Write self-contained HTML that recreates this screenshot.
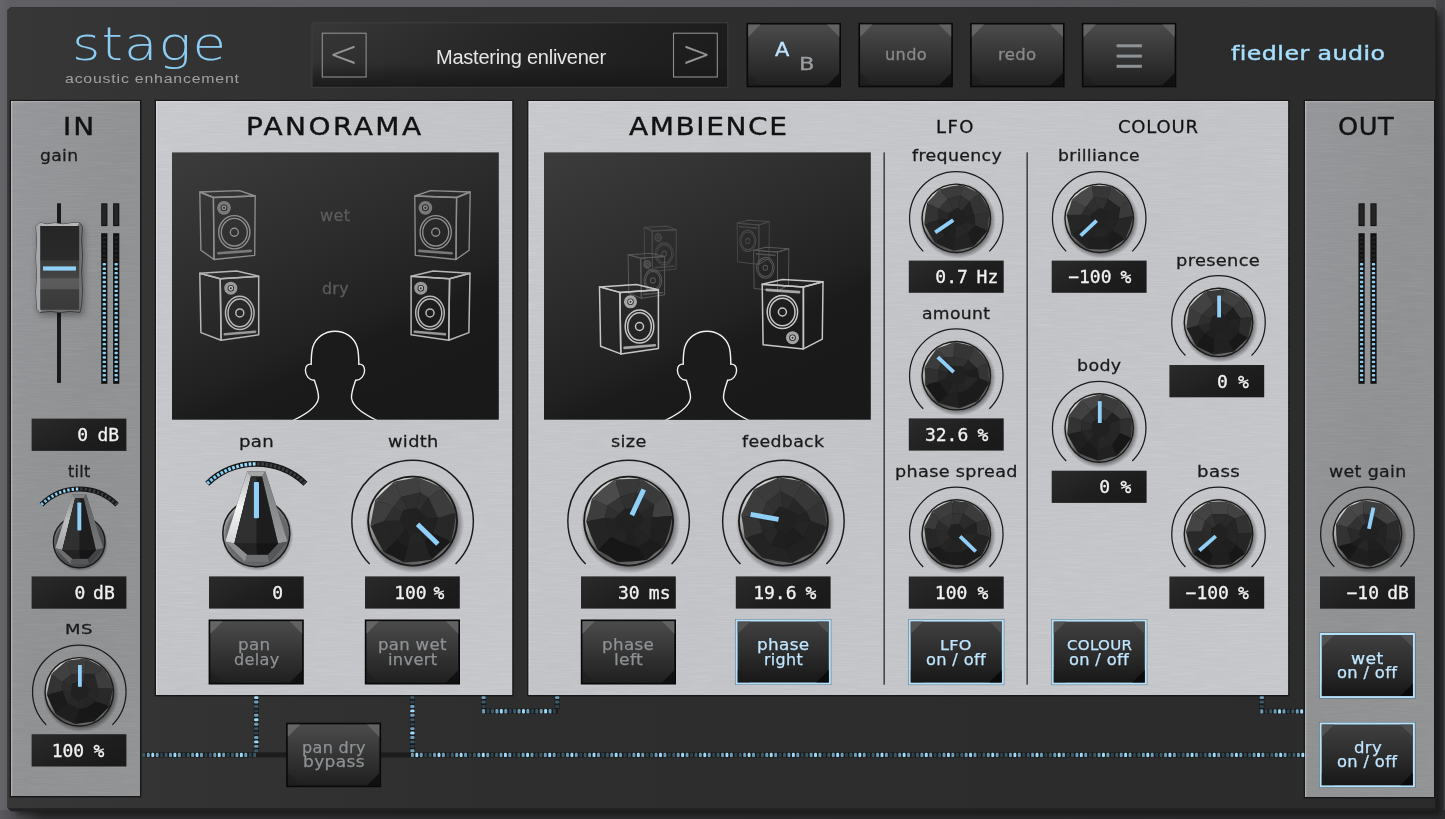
<!DOCTYPE html>
<html lang="en">
<head>
<meta charset="utf-8">
<title>stage - acoustic enhancement</title>
<style>
html,body{margin:0;padding:0;background:#56555a;overflow:hidden}
#app{position:relative;width:1445px;height:819px;overflow:hidden;
 background:linear-gradient(90deg,#66656a 0,#5f5e63 0.6%,#5e5d62 30%,#504f52 100%)}
#gfx{position:absolute;left:0;top:0;display:block}
#txt{position:absolute;left:0;top:0;width:1445px;height:819px;will-change:transform;transform:translateZ(0)}
.t{position:absolute;margin:0;padding:0;white-space:pre;line-height:1;font-weight:400;transform-origin:0 0;
 font-family:"DejaVu Sans","Liberation Sans",sans-serif}
.logo,.arrow{font-weight:200}
.arrow{-webkit-text-stroke:0.25px currentColor}
.brand{-webkit-text-stroke:0.45px currentColor}
.title{-webkit-text-stroke:0.4px currentColor}
.lbl,.title2{-webkit-text-stroke:0.28px currentColor}
.cap{-webkit-text-stroke:0.25px currentColor}
.btn,.ab{-webkit-text-stroke:0.3px currentColor}
.sub,.preset{font-family:"Liberation Sans","DejaVu Sans",sans-serif}
.val{font-family:"DejaVu Sans Mono","Liberation Mono",monospace;-webkit-text-stroke:0.3px currentColor}
</style>
</head>
<body>
<div id="app">
<svg id="gfx" width="1445" height="819" viewBox="0 0 1445 819">
<defs>
<linearGradient id="frame" x1="0" y1="0" x2="1" y2="0"><stop offset="0" stop-color="#373737"/><stop offset="0.12" stop-color="#333"/><stop offset="0.35" stop-color="#2e2e2e"/><stop offset="1" stop-color="#2b2b2b"/></linearGradient>
<linearGradient id="pnl" x1="0" y1="0" x2="1" y2="1"><stop offset="0" stop-color="#c6c8cc"/><stop offset="0.5" stop-color="#c0c2c6"/><stop offset="1" stop-color="#c4c6ca"/></linearGradient>
<linearGradient id="side" x1="0" y1="0" x2="1" y2="1"><stop offset="0" stop-color="#959699"/><stop offset="0.5" stop-color="#8e9092"/><stop offset="1" stop-color="#909294"/></linearGradient>
<linearGradient id="disp" x1="0" y1="0" x2="0.55" y2="1"><stop offset="0" stop-color="#3c3c3c"/><stop offset="0.45" stop-color="#2c2c2c"/><stop offset="0.72" stop-color="#212121"/><stop offset="0.8" stop-color="#1b1b1b"/><stop offset="1" stop-color="#191919"/></linearGradient>
<linearGradient id="preset" x1="0" y1="0" x2="0" y2="1"><stop offset="0" stop-color="#383838"/><stop offset="0.62" stop-color="#323232"/><stop offset="0.82" stop-color="#242424"/><stop offset="1" stop-color="#1b1b1b"/></linearGradient>
<linearGradient id="presetx" x1="0" y1="0" x2="1" y2="0"><stop offset="0" stop-color="#161616" stop-opacity="0"/><stop offset="0.45" stop-color="#161616" stop-opacity="0.45"/><stop offset="1" stop-color="#181818" stop-opacity="0.85"/></linearGradient>
<linearGradient id="btn" x1="0" y1="0" x2="0" y2="1"><stop offset="0" stop-color="#4b4b4b"/><stop offset="0.55" stop-color="#333"/><stop offset="1" stop-color="#1f1f1f"/></linearGradient>
<linearGradient id="btnon" x1="0" y1="0" x2="0" y2="1"><stop offset="0" stop-color="#404040"/><stop offset="0.55" stop-color="#2b2b2b"/><stop offset="1" stop-color="#171717"/></linearGradient>
<linearGradient id="vb" x1="0" y1="0" x2="1" y2="0.6"><stop offset="0" stop-color="#2b2b2b"/><stop offset="0.6" stop-color="#1f1f1f"/><stop offset="1" stop-color="#1a1a1a"/></linearGradient>
<linearGradient id="krim" x1="0.15" y1="0" x2="0.85" y2="1"><stop offset="0" stop-color="#e6e6e6"/><stop offset="0.3" stop-color="#a8a8a8"/><stop offset="0.62" stop-color="#4a4a4a"/><stop offset="1" stop-color="#777"/></linearGradient>
<radialGradient id="kshadow" cx="0.5" cy="0.5" r="0.5"><stop offset="0.86" stop-color="#000" stop-opacity="0.4"/><stop offset="1" stop-color="#000" stop-opacity="0"/></radialGradient>
<linearGradient id="cbase" x1="0" y1="0" x2="1" y2="1"><stop offset="0" stop-color="#000" stop-opacity="0.02"/><stop offset="1" stop-color="#000" stop-opacity="0.16"/></linearGradient>
<linearGradient id="cleft" x1="0" y1="0" x2="0" y2="1"><stop offset="0" stop-color="#b4b6b8"/><stop offset="0.5" stop-color="#f4f4f4"/><stop offset="1" stop-color="#d2d4d6"/></linearGradient>
<linearGradient id="cright" x1="0" y1="0" x2="0" y2="1"><stop offset="0" stop-color="#7a7c7e"/><stop offset="1" stop-color="#97999b"/></linearGradient>
<linearGradient id="fcap" x1="0" y1="0" x2="0" y2="1"><stop offset="0" stop-color="#262626"/><stop offset="0.4" stop-color="#2a2a2a"/><stop offset="0.42" stop-color="#3a3a3a"/><stop offset="0.62" stop-color="#444"/><stop offset="0.63" stop-color="#5c5c5c"/><stop offset="0.75" stop-color="#585858"/><stop offset="0.76" stop-color="#3e3e3e"/><stop offset="1" stop-color="#3a3a3a"/></linearGradient>
<linearGradient id="rstrip" x1="0" y1="0" x2="0" y2="1"><stop offset="0" stop-color="#454448"/><stop offset="0.05" stop-color="#38373b"/><stop offset="0.2" stop-color="#302f32"/><stop offset="1" stop-color="#2e2d30"/></linearGradient>
<linearGradient id="bstrip" x1="0" y1="0" x2="1" y2="0"><stop offset="0" stop-color="#5a595e"/><stop offset="0.012" stop-color="#4a494d"/><stop offset="0.03" stop-color="#2f2f31"/><stop offset="1" stop-color="#2b2b2d"/></linearGradient>
<filter id="brush" x="0" y="0" width="100%" height="100%"><feTurbulence type="fractalNoise" baseFrequency="0.035 0.95" numOctaves="2" seed="4" result="n"/><feColorMatrix type="matrix" values="0 0 0 0 1  0 0 0 0 1  0 0 0 0 1  1.6 0 0 0 -0.62"/></filter>
<filter id="soft" x="-20%" y="-20%" width="140%" height="140%"><feGaussianBlur stdDeviation="3"/></filter>
<clipPath id="cd1"><rect x="172" y="152.4" width="326.8" height="267.3"/></clipPath>
<clipPath id="cd2"><rect x="544" y="152.4" width="326.8" height="267.3"/></clipPath>
</defs>
<rect x="1436" y="0" width="9" height="819" fill="url(#rstrip)"/>
<rect x="1443.6" y="0" width="1.4" height="819" fill="#4a494c" opacity="0.8"/>
<rect x="0" y="810" width="1445" height="9" fill="url(#bstrip)"/>
<rect x="16" y="14" width="1424" height="800" fill="#000" opacity="0.5" filter="url(#soft)"/>
<path d="M10.5 7.3H1433.5L1436.6 10.5V811.2H11L7.5 808V10.3Z" fill="#212121"/>
<path d="M10.5 7.3H1432.5L1435 9.8V808.2H7.5V10.3Z" fill="url(#frame)"/>
<rect x="9.7" y="99.9" width="131.7" height="697.5" fill="#171717"/>
<rect x="11" y="101" width="129" height="695" fill="url(#side)"/>
<rect x="11" y="101" width="129" height="695" fill="#fff" filter="url(#brush)" opacity="0.08"/>
<rect x="11" y="101" width="1.2" height="695" fill="#fff" opacity="0.3"/>
<rect x="11" y="101" width="129" height="1.2" fill="#fff" opacity="0.2"/>
<rect x="154.7" y="99.9" width="358.9" height="596.5" fill="#171717"/>
<rect x="156" y="101" width="356.2" height="594" fill="url(#pnl)"/>
<rect x="156" y="101" width="356.2" height="594" fill="#fff" filter="url(#brush)" opacity="0.15"/>
<rect x="156" y="101" width="1.2" height="594" fill="#fff" opacity="0.3"/>
<rect x="156" y="101" width="356.2" height="1.2" fill="#fff" opacity="0.2"/>
<rect x="527.2" y="99.9" width="762.3" height="596.5" fill="#171717"/>
<rect x="528.5" y="101" width="759.6" height="594" fill="url(#pnl)"/>
<rect x="528.5" y="101" width="759.6" height="594" fill="#fff" filter="url(#brush)" opacity="0.15"/>
<rect x="528.5" y="101" width="1.2" height="594" fill="#fff" opacity="0.3"/>
<rect x="528.5" y="101" width="759.6" height="1.2" fill="#fff" opacity="0.2"/>
<rect x="1303.7" y="99.9" width="131.7" height="698.5" fill="#171717"/>
<rect x="1305" y="101" width="129" height="696" fill="url(#side)"/>
<rect x="1305" y="101" width="129" height="696" fill="#fff" filter="url(#brush)" opacity="0.08"/>
<rect x="1305" y="101" width="1.2" height="696" fill="#fff" opacity="0.3"/>
<rect x="1305" y="101" width="129" height="1.2" fill="#fff" opacity="0.2"/>
<rect x="312" y="22.8" width="415.8" height="64.5" fill="url(#preset)"/>
<rect x="312" y="22.8" width="415.8" height="64.5" fill="url(#presetx)" stroke="#3b4043" stroke-width="1"/>
<rect x="322.3" y="33.2" width="43.8" height="43.8" fill="none" stroke="#8e8e8e" stroke-width="1.1"/>
<rect x="673.5" y="33.2" width="43.8" height="43.8" fill="none" stroke="#8e8e8e" stroke-width="1.1"/>
<g transform="translate(746.5 22.9)">
<rect x="0" y="0" width="94.5" height="64.4" fill="#090909"/>
<rect x="1.7" y="1.7" width="91.1" height="61" fill="url(#btn)"/>
<polygon points="1.7,1.7 14.2,1.7 1.7,14.2" fill="#6a6a6a" opacity="0.85"/>
<polygon points="92.8,1.7 80.3,1.7 92.8,14.2" fill="#666" opacity="0.85"/>
<polygon points="92.8,62.7 80.3,62.7 92.8,50.2" fill="#0c0c0c" opacity="0.8"/>
<polygon points="1.7,62.7 14.2,62.7 1.7,50.2" fill="#1c1c1c" opacity="0.5"/>
</g>
<g transform="translate(858.4 22.9)">
<rect x="0" y="0" width="94.5" height="64.4" fill="#090909"/>
<rect x="1.7" y="1.7" width="91.1" height="61" fill="url(#btn)"/>
<polygon points="1.7,1.7 14.2,1.7 1.7,14.2" fill="#6a6a6a" opacity="0.85"/>
<polygon points="92.8,1.7 80.3,1.7 92.8,14.2" fill="#666" opacity="0.85"/>
<polygon points="92.8,62.7 80.3,62.7 92.8,50.2" fill="#0c0c0c" opacity="0.8"/>
<polygon points="1.7,62.7 14.2,62.7 1.7,50.2" fill="#1c1c1c" opacity="0.5"/>
</g>
<g transform="translate(970.1 22.9)">
<rect x="0" y="0" width="94.5" height="64.4" fill="#090909"/>
<rect x="1.7" y="1.7" width="91.1" height="61" fill="url(#btn)"/>
<polygon points="1.7,1.7 14.2,1.7 1.7,14.2" fill="#6a6a6a" opacity="0.85"/>
<polygon points="92.8,1.7 80.3,1.7 92.8,14.2" fill="#666" opacity="0.85"/>
<polygon points="92.8,62.7 80.3,62.7 92.8,50.2" fill="#0c0c0c" opacity="0.8"/>
<polygon points="1.7,62.7 14.2,62.7 1.7,50.2" fill="#1c1c1c" opacity="0.5"/>
</g>
<g transform="translate(1081.8 22.9)">
<rect x="0" y="0" width="94.5" height="64.4" fill="#090909"/>
<rect x="1.7" y="1.7" width="91.1" height="61" fill="url(#btn)"/>
<polygon points="1.7,1.7 14.2,1.7 1.7,14.2" fill="#6a6a6a" opacity="0.85"/>
<polygon points="92.8,1.7 80.3,1.7 92.8,14.2" fill="#666" opacity="0.85"/>
<polygon points="92.8,62.7 80.3,62.7 92.8,50.2" fill="#0c0c0c" opacity="0.8"/>
<polygon points="1.7,62.7 14.2,62.7 1.7,50.2" fill="#1c1c1c" opacity="0.5"/>
</g>
<rect x="1116.6" y="44.3" width="25.3" height="3" fill="#8d9297"/>
<rect x="1116.6" y="54.6" width="25.3" height="3" fill="#8d9297"/>
<rect x="1116.6" y="64.8" width="25.3" height="3" fill="#8d9297"/>
<rect x="57" y="203.3" width="4" height="179.6" fill="#1a1a1a"/>
<rect x="101.2" y="203.3" width="6.2" height="22.8" fill="#101010"/>
<rect x="102.1" y="204.3" width="4.4" height="20.8" fill="#252525"/>
<rect x="101.2" y="233.2" width="6.2" height="150.6" fill="#121212"/>
<rect x="102.6" y="236.4" width="3.4" height="2.4" rx="0.9" fill="#232323"/>
<rect x="102.6" y="240.84" width="3.4" height="2.4" rx="0.9" fill="#232323"/>
<rect x="102.6" y="245.28" width="3.4" height="2.4" rx="0.9" fill="#232323"/>
<rect x="102.6" y="249.72" width="3.4" height="2.4" rx="0.9" fill="#232323"/>
<rect x="102.6" y="254.16" width="3.4" height="2.4" rx="0.9" fill="#232323"/>
<rect x="102.6" y="258.6" width="3.4" height="2.4" rx="0.9" fill="#232323"/>
<rect x="102.6" y="263.04" width="3.4" height="2.4" rx="0.9" fill="#8fd0f2"/>
<rect x="102.6" y="267.48" width="3.4" height="2.4" rx="0.9" fill="#8fd0f2"/>
<rect x="102.6" y="271.92" width="3.4" height="2.4" rx="0.9" fill="#8fd0f2"/>
<rect x="102.6" y="276.36" width="3.4" height="2.4" rx="0.9" fill="#8fd0f2"/>
<rect x="102.6" y="280.8" width="3.4" height="2.4" rx="0.9" fill="#8fd0f2"/>
<rect x="102.6" y="285.24" width="3.4" height="2.4" rx="0.9" fill="#8fd0f2"/>
<rect x="102.6" y="289.68" width="3.4" height="2.4" rx="0.9" fill="#8fd0f2"/>
<rect x="102.6" y="294.12" width="3.4" height="2.4" rx="0.9" fill="#8fd0f2"/>
<rect x="102.6" y="298.56" width="3.4" height="2.4" rx="0.9" fill="#8fd0f2"/>
<rect x="102.6" y="303" width="3.4" height="2.4" rx="0.9" fill="#8fd0f2"/>
<rect x="102.6" y="307.44" width="3.4" height="2.4" rx="0.9" fill="#8fd0f2"/>
<rect x="102.6" y="311.88" width="3.4" height="2.4" rx="0.9" fill="#8fd0f2"/>
<rect x="102.6" y="316.32" width="3.4" height="2.4" rx="0.9" fill="#8fd0f2"/>
<rect x="102.6" y="320.76" width="3.4" height="2.4" rx="0.9" fill="#8fd0f2"/>
<rect x="102.6" y="325.2" width="3.4" height="2.4" rx="0.9" fill="#8fd0f2"/>
<rect x="102.6" y="329.64" width="3.4" height="2.4" rx="0.9" fill="#8fd0f2"/>
<rect x="102.6" y="334.08" width="3.4" height="2.4" rx="0.9" fill="#8fd0f2"/>
<rect x="102.6" y="338.52" width="3.4" height="2.4" rx="0.9" fill="#8fd0f2"/>
<rect x="102.6" y="342.96" width="3.4" height="2.4" rx="0.9" fill="#8fd0f2"/>
<rect x="102.6" y="347.4" width="3.4" height="2.4" rx="0.9" fill="#8fd0f2"/>
<rect x="102.6" y="351.84" width="3.4" height="2.4" rx="0.9" fill="#8fd0f2"/>
<rect x="102.6" y="356.28" width="3.4" height="2.4" rx="0.9" fill="#8fd0f2"/>
<rect x="102.6" y="360.72" width="3.4" height="2.4" rx="0.9" fill="#8fd0f2"/>
<rect x="102.6" y="365.16" width="3.4" height="2.4" rx="0.9" fill="#8fd0f2"/>
<rect x="102.6" y="369.6" width="3.4" height="2.4" rx="0.9" fill="#8fd0f2"/>
<rect x="102.6" y="374.04" width="3.4" height="2.4" rx="0.9" fill="#8fd0f2"/>
<rect x="102.6" y="378.48" width="3.4" height="2.4" rx="0.9" fill="#8fd0f2"/>
<rect x="113.1" y="203.3" width="6.2" height="22.8" fill="#101010"/>
<rect x="114" y="204.3" width="4.4" height="20.8" fill="#252525"/>
<rect x="113.1" y="233.2" width="6.2" height="150.6" fill="#121212"/>
<rect x="114.5" y="236.4" width="3.4" height="2.4" rx="0.9" fill="#232323"/>
<rect x="114.5" y="240.84" width="3.4" height="2.4" rx="0.9" fill="#232323"/>
<rect x="114.5" y="245.28" width="3.4" height="2.4" rx="0.9" fill="#232323"/>
<rect x="114.5" y="249.72" width="3.4" height="2.4" rx="0.9" fill="#232323"/>
<rect x="114.5" y="254.16" width="3.4" height="2.4" rx="0.9" fill="#232323"/>
<rect x="114.5" y="258.6" width="3.4" height="2.4" rx="0.9" fill="#232323"/>
<rect x="114.5" y="263.04" width="3.4" height="2.4" rx="0.9" fill="#8fd0f2"/>
<rect x="114.5" y="267.48" width="3.4" height="2.4" rx="0.9" fill="#8fd0f2"/>
<rect x="114.5" y="271.92" width="3.4" height="2.4" rx="0.9" fill="#8fd0f2"/>
<rect x="114.5" y="276.36" width="3.4" height="2.4" rx="0.9" fill="#8fd0f2"/>
<rect x="114.5" y="280.8" width="3.4" height="2.4" rx="0.9" fill="#8fd0f2"/>
<rect x="114.5" y="285.24" width="3.4" height="2.4" rx="0.9" fill="#8fd0f2"/>
<rect x="114.5" y="289.68" width="3.4" height="2.4" rx="0.9" fill="#8fd0f2"/>
<rect x="114.5" y="294.12" width="3.4" height="2.4" rx="0.9" fill="#8fd0f2"/>
<rect x="114.5" y="298.56" width="3.4" height="2.4" rx="0.9" fill="#8fd0f2"/>
<rect x="114.5" y="303" width="3.4" height="2.4" rx="0.9" fill="#8fd0f2"/>
<rect x="114.5" y="307.44" width="3.4" height="2.4" rx="0.9" fill="#8fd0f2"/>
<rect x="114.5" y="311.88" width="3.4" height="2.4" rx="0.9" fill="#8fd0f2"/>
<rect x="114.5" y="316.32" width="3.4" height="2.4" rx="0.9" fill="#8fd0f2"/>
<rect x="114.5" y="320.76" width="3.4" height="2.4" rx="0.9" fill="#8fd0f2"/>
<rect x="114.5" y="325.2" width="3.4" height="2.4" rx="0.9" fill="#8fd0f2"/>
<rect x="114.5" y="329.64" width="3.4" height="2.4" rx="0.9" fill="#8fd0f2"/>
<rect x="114.5" y="334.08" width="3.4" height="2.4" rx="0.9" fill="#8fd0f2"/>
<rect x="114.5" y="338.52" width="3.4" height="2.4" rx="0.9" fill="#8fd0f2"/>
<rect x="114.5" y="342.96" width="3.4" height="2.4" rx="0.9" fill="#8fd0f2"/>
<rect x="114.5" y="347.4" width="3.4" height="2.4" rx="0.9" fill="#8fd0f2"/>
<rect x="114.5" y="351.84" width="3.4" height="2.4" rx="0.9" fill="#8fd0f2"/>
<rect x="114.5" y="356.28" width="3.4" height="2.4" rx="0.9" fill="#8fd0f2"/>
<rect x="114.5" y="360.72" width="3.4" height="2.4" rx="0.9" fill="#8fd0f2"/>
<rect x="114.5" y="365.16" width="3.4" height="2.4" rx="0.9" fill="#8fd0f2"/>
<rect x="114.5" y="369.6" width="3.4" height="2.4" rx="0.9" fill="#8fd0f2"/>
<rect x="114.5" y="374.04" width="3.4" height="2.4" rx="0.9" fill="#8fd0f2"/>
<rect x="114.5" y="378.48" width="3.4" height="2.4" rx="0.9" fill="#8fd0f2"/>
<rect x="37.5" y="225" width="47" height="91" rx="5" fill="#000" opacity="0.3" filter="url(#soft)"/>
<path d="M39.5 222.6 L47 224.2 L55 223 L63 224.3 L72 223 L79.5 222.8 L82.5 226.5 L81.6 240 L82.6 256 L81.6 272 L82.6 290 L81.6 305 L80 312.5 L70 311.4 L60 312.6 L50 311.4 L40 312.6 L37 309 L36 292 L37 275 L36 258 L37 240 L36 226Z" fill="#6f7173" stroke="#3a3a3a" stroke-width="0.9"/>
<path d="M39.5 222.6 L47 224.2 L55 223 L63 224.3 L72 223 L79.5 222.8 L77 226.6 H42Z" fill="#b4b6b8"/>
<path d="M36 226 L39.5 222.6 L42 226 V309 L40 312.6 L37 309 L36 292 L37 275 L36 258 L37 240Z" fill="#a7a9ab"/>
<rect x="40.2" y="226" width="39" height="83.8" fill="url(#fcap)"/>
<rect x="43" y="266.4" width="33" height="4.2" fill="#8fcff8"/>
<rect x="31.6" y="418.6" width="94.8" height="32.3" fill="url(#vb)"/>
<g transform="translate(79.2 542)">
<path d="M-37.82 -37.56A53.3 53.3 0 0 1 37.82 -37.56" fill="none" stroke="#161616" stroke-width="5" transform="translate(0 0.3)"/>
<rect x="-1.15" y="-1.5" width="2.3" height="3" fill="#78c8f5" transform="translate(-37.03 -38.04) rotate(-44)"/>
<rect x="-1.15" y="-1.5" width="2.3" height="3" fill="#7ccaf6" transform="translate(-33.81 -40.91) rotate(-39.37)"/>
<rect x="-1.15" y="-1.5" width="2.3" height="3" fill="#80cdf7" transform="translate(-30.37 -43.5) rotate(-34.74)"/>
<rect x="-1.15" y="-1.5" width="2.3" height="3" fill="#85d0f8" transform="translate(-26.73 -45.81) rotate(-30.11)"/>
<rect x="-1.15" y="-1.5" width="2.3" height="3" fill="#89d3f9" transform="translate(-22.92 -47.82) rotate(-25.47)"/>
<rect x="-1.15" y="-1.5" width="2.3" height="3" fill="#8ed5fa" transform="translate(-18.96 -49.51) rotate(-20.84)"/>
<rect x="-1.15" y="-1.5" width="2.3" height="3" fill="#92d8fb" transform="translate(-14.88 -50.88) rotate(-16.21)"/>
<rect x="-1.15" y="-1.5" width="2.3" height="3" fill="#97dbfc" transform="translate(-10.7 -51.92) rotate(-11.58)"/>
<rect x="-1.15" y="-1.5" width="2.3" height="3" fill="#9bdefd" transform="translate(-6.45 -52.61) rotate(-6.95)"/>
<rect x="-1.15" y="-1.5" width="2.3" height="3" fill="#a0e1ff" transform="translate(-2.15 -52.96) rotate(-2.32)"/>
<rect x="-1.15" y="-1.5" width="2.3" height="3" fill="#3a3d40" transform="translate(2.15 -52.96) rotate(2.32)"/>
<rect x="-1.15" y="-1.5" width="2.3" height="3" fill="#3a3d40" transform="translate(6.45 -52.61) rotate(6.95)"/>
<rect x="-1.15" y="-1.5" width="2.3" height="3" fill="#3a3d40" transform="translate(10.7 -51.92) rotate(11.58)"/>
<rect x="-1.15" y="-1.5" width="2.3" height="3" fill="#3a3d40" transform="translate(14.88 -50.88) rotate(16.21)"/>
<rect x="-1.15" y="-1.5" width="2.3" height="3" fill="#3a3d40" transform="translate(18.96 -49.51) rotate(20.84)"/>
<rect x="-1.15" y="-1.5" width="2.3" height="3" fill="#3a3d40" transform="translate(22.92 -47.82) rotate(25.47)"/>
<rect x="-1.15" y="-1.5" width="2.3" height="3" fill="#3a3d40" transform="translate(26.73 -45.81) rotate(30.11)"/>
<rect x="-1.15" y="-1.5" width="2.3" height="3" fill="#3a3d40" transform="translate(30.37 -43.5) rotate(34.74)"/>
<rect x="-1.15" y="-1.5" width="2.3" height="3" fill="#3a3d40" transform="translate(33.81 -40.91) rotate(39.37)"/>
<rect x="-1.15" y="-1.5" width="2.3" height="3" fill="#3a3d40" transform="translate(37.03 -38.04) rotate(44)"/>
<g transform="scale(0.77)">
<circle cx="1.2" cy="2" r="36" fill="url(#kshadow)"/>
<circle r="33.5" fill="url(#cbase)" stroke="#1a1a1a" stroke-width="1.8"/>
<polygon points="-9,-62 8.9,-62 31.3,8.2 13,29 -11.2,29 -31,8.2" fill="#3c3c3c"/>
<polygon points="-9,-62 -5.3,-56.7 -21.9,10.3 -31,8.2" fill="url(#cleft)"/>
<polygon points="8.9,-62 31.3,8.2 21.7,10.3 5.7,-56.7" fill="url(#cright)"/>
<polygon points="-9,-62 8.9,-62 5.7,-56.7 -5.3,-56.7" fill="#a4a6a8"/>
<polygon points="-31,8.2 -21.9,10.3 -9,21.3 -11.2,29" fill="#8d8f91"/>
<polygon points="-11.2,29 -9,21.3 11.5,21.3 13,29" fill="#6d6f71"/>
<polygon points="31.3,8.2 13,29 11.5,21.3 21.7,10.3" fill="#55575a"/>
<polygon points="-9,-62 8.9,-62 31.3,8.2 13,29 -11.2,29 -31,8.2" fill="#000" opacity="0.22"/>
<polygon points="-5.3,-56.7 5.7,-56.7 21.7,10.3 11.5,21.3 -9,21.3 -21.9,10.3" fill="#1d1d1d"/>
<polygon points="-5.3,-56.7 0.2,-56.7 0.2,10.3 -21.9,10.3" fill="#303030"/>
<polygon points="-21.9,10.3 0.2,10.3 1,21.3 -9,21.3" fill="#232323"/>
<polygon points="0.2,10.3 21.7,10.3 11.5,21.3 1,21.3" fill="#151515"/>
<rect x="-2.4" y="-51.3" width="5.1" height="36.3" rx="1" fill="#8fcff8"/>
</g></g>
<rect x="31.6" y="576.4" width="94.8" height="32.3" fill="url(#vb)"/>
<g transform="translate(79.3 691.8)">
<path d="M-33.06 33.06A46.75 46.75 0 1 1 33.06 33.06" fill="none" stroke="#1b1b1b" stroke-width="1.25"/>
<circle cx="1.6" cy="2.2" r="38.1" fill="url(#kshadow)"/>
<circle r="34.9" fill="#1a1a1a"/>
<circle r="33.5" fill="url(#krim)"/>
<g transform="translate(0.6 -0.6) rotate(0)">
<circle r="30.97" fill="#1b1b1b"/>
<polygon points="5.84,-32.78 15.31,-27.87 24.53,-22.52 14.57,-17.17 5.37,-17.43" fill="#393939"/>
<polygon points="24.53,-22.52 29.15,-12.71 33.19,-2.65 18.19,-2.78 14.57,-17.17" fill="#3d3d3d"/>
<polygon points="33.19,-2.65 31.21,6.11 29.74,14.98 15.52,10.42 18.19,-2.78" fill="#292929"/>
<polygon points="29.74,14.98 22.34,22.64 14.58,29.94 7.48,16.08 15.52,10.42" fill="#171717"/>
<polygon points="14.58,29.94 4.75,31.44 -5.08,32.91 -0.96,17.83 7.48,16.08" fill="#181818"/>
<polygon points="-5.08,32.91 -14.67,28.22 -24.02,23.06 -12.95,11.62 -0.96,17.83" fill="#1e1e1e"/>
<polygon points="-24.02,23.06 -28.9,13.27 -33.15,3.19 -17.33,-0.45 -12.95,11.62" fill="#1b1b1b"/>
<polygon points="-33.15,3.19 -30.97,-7.21 -28.33,-17.51 -17.87,-9.27 -17.33,-0.45" fill="#333333"/>
<polygon points="-28.33,-17.51 -20.67,-24.17 -12.9,-30.7 -8.03,-17.11 -17.87,-9.27" fill="#404040"/>
<polygon points="-12.9,-30.7 -3.51,-31.61 5.84,-32.78 5.37,-17.43 -8.03,-17.11" fill="#3e3e3e"/>
<polygon points="5.37,-17.43 14.57,-17.17 0,0" fill="#262626"/>
<polygon points="14.57,-17.17 18.19,-2.78 0,0" fill="#272727"/>
<polygon points="18.19,-2.78 15.52,10.42 0,0" fill="#272727"/>
<polygon points="15.52,10.42 7.48,16.08 0,0" fill="#252525"/>
<polygon points="7.48,16.08 -0.96,17.83 0,0" fill="#262626"/>
<polygon points="-0.96,17.83 -12.95,11.62 0,0" fill="#272727"/>
<polygon points="-12.95,11.62 -17.33,-0.45 0,0" fill="#292929"/>
<polygon points="-17.33,-0.45 -17.87,-9.27 0,0" fill="#2d2d2d"/>
<polygon points="-17.87,-9.27 -8.03,-17.11 0,0" fill="#2f2f2f"/>
<polygon points="-8.03,-17.11 5.37,-17.43 0,0" fill="#303030"/>
<polygon points="1.92,-9.66 9.34,-2.7 7.33,6.14 -2.36,9.57 -9.21,4.01 -7.96,-7.82" fill="#212121"/>
<rect x="-1.9" y="-26.2" width="3.8" height="21.8" fill="#8fcff8"/>
</g>
</g>
<rect x="31.6" y="734.2" width="94.8" height="32.3" fill="url(#vb)"/>
<rect x="172" y="152.4" width="326.8" height="267.3" fill="url(#disp)"/>
<g clip-path="url(#cd1)">
<g transform="translate(199.5 190.3) scale(1 1)">
<polygon points="13.9,7.2 55.7,5.7 55.2,65 14.5,69.2" fill="none" stroke="#8e8e8e" stroke-width="1.35" stroke-linejoin="round"/>
<polygon points="0.3,1.7 39.8,0.3 55.7,5.7 13.9,7.2" fill="none" stroke="#8e8e8e" stroke-width="1.35" stroke-linejoin="round"/>
<polygon points="0.3,1.7 13.9,7.2 14.5,69.2 1.4,59.9" fill="none" stroke="#8e8e8e" stroke-width="1.35" stroke-linejoin="round"/>
<circle cx="24.5" cy="17.5" r="5.2" fill="none" stroke="#8e8e8e" stroke-width="3.4" opacity="0.8"/>
<circle cx="24.5" cy="17.5" r="1.8" fill="none" stroke="#8e8e8e" stroke-width="1.35" stroke-linejoin="round"/>
<ellipse cx="34.8" cy="41.9" rx="15.6" ry="16.6" fill="none" stroke="#8e8e8e" stroke-width="1.35" stroke-linejoin="round"/>
<ellipse cx="34.8" cy="41.9" rx="13.0" ry="13.8" fill="none" stroke="#8e8e8e" stroke-width="1.35" stroke-linejoin="round"/>
<circle cx="34.8" cy="41.9" r="4.0" fill="none" stroke="#8e8e8e" stroke-width="1.35" stroke-linejoin="round"/>
<line x1="18.8" y1="62.9" x2="51.2" y2="60.6" stroke="#8e8e8e" stroke-width="2.6" stroke-linecap="round" opacity="0.8"/>
</g>
<g transform="translate(470.5 190.3) scale(-1 1)">
<polygon points="13.9,7.2 55.7,5.7 55.2,65 14.5,69.2" fill="none" stroke="#8e8e8e" stroke-width="1.35" stroke-linejoin="round"/>
<polygon points="0.3,1.7 39.8,0.3 55.7,5.7 13.9,7.2" fill="none" stroke="#8e8e8e" stroke-width="1.35" stroke-linejoin="round"/>
<polygon points="0.3,1.7 13.9,7.2 14.5,69.2 1.4,59.9" fill="none" stroke="#8e8e8e" stroke-width="1.35" stroke-linejoin="round"/>
<circle cx="45.1" cy="17.5" r="5.2" fill="none" stroke="#8e8e8e" stroke-width="3.4" opacity="0.8"/>
<circle cx="45.1" cy="17.5" r="1.8" fill="none" stroke="#8e8e8e" stroke-width="1.35" stroke-linejoin="round"/>
<ellipse cx="34.8" cy="41.9" rx="15.6" ry="16.6" fill="none" stroke="#8e8e8e" stroke-width="1.35" stroke-linejoin="round"/>
<ellipse cx="34.8" cy="41.9" rx="13.0" ry="13.8" fill="none" stroke="#8e8e8e" stroke-width="1.35" stroke-linejoin="round"/>
<circle cx="34.8" cy="41.9" r="4.0" fill="none" stroke="#8e8e8e" stroke-width="1.35" stroke-linejoin="round"/>
<line x1="18.8" y1="62.9" x2="51.2" y2="60.6" stroke="#8e8e8e" stroke-width="2.6" stroke-linecap="round" opacity="0.8"/>
</g>
<g transform="translate(199.5 270.7) scale(1 1)">
<polygon points="20.7,8.1 59.2,5.5 59.2,64.1 21.6,69.6" fill="none" stroke="#b6b6b6" stroke-width="1.5" stroke-linejoin="round"/>
<polygon points="0.3,2.6 37.2,0.3 59.2,5.5 20.7,8.1" fill="none" stroke="#b6b6b6" stroke-width="1.5" stroke-linejoin="round"/>
<polygon points="0.3,2.6 20.7,8.1 21.6,69.6 1.4,61.9" fill="none" stroke="#b6b6b6" stroke-width="1.5" stroke-linejoin="round"/>
<circle cx="31.3" cy="17.5" r="4.9" fill="none" stroke="#b6b6b6" stroke-width="3.3" opacity="0.8"/>
<circle cx="31.3" cy="17.5" r="1.7" fill="none" stroke="#b6b6b6" stroke-width="1.5" stroke-linejoin="round"/>
<ellipse cx="40.3" cy="42.2" rx="14.3" ry="16.6" fill="none" stroke="#b6b6b6" stroke-width="1.5" stroke-linejoin="round"/>
<ellipse cx="40.3" cy="42.2" rx="11.8" ry="13.8" fill="none" stroke="#b6b6b6" stroke-width="1.5" stroke-linejoin="round"/>
<circle cx="40.3" cy="42.2" r="4.0" fill="none" stroke="#b6b6b6" stroke-width="1.5" stroke-linejoin="round"/>
<line x1="25.3" y1="63.6" x2="55.6" y2="61.0" stroke="#b6b6b6" stroke-width="2.6" stroke-linecap="round" opacity="0.8"/>
</g>
<g transform="translate(470.3 270.7) scale(-1 1)">
<polygon points="20.7,8.1 59.2,5.5 59.2,64.1 21.6,69.6" fill="none" stroke="#b6b6b6" stroke-width="1.5" stroke-linejoin="round"/>
<polygon points="0.3,2.6 37.2,0.3 59.2,5.5 20.7,8.1" fill="none" stroke="#b6b6b6" stroke-width="1.5" stroke-linejoin="round"/>
<polygon points="0.3,2.6 20.7,8.1 21.6,69.6 1.4,61.9" fill="none" stroke="#b6b6b6" stroke-width="1.5" stroke-linejoin="round"/>
<circle cx="49.5" cy="17.5" r="4.9" fill="none" stroke="#b6b6b6" stroke-width="3.3" opacity="0.8"/>
<circle cx="49.5" cy="17.5" r="1.7" fill="none" stroke="#b6b6b6" stroke-width="1.5" stroke-linejoin="round"/>
<ellipse cx="40.3" cy="42.2" rx="14.3" ry="16.6" fill="none" stroke="#b6b6b6" stroke-width="1.5" stroke-linejoin="round"/>
<ellipse cx="40.3" cy="42.2" rx="11.8" ry="13.8" fill="none" stroke="#b6b6b6" stroke-width="1.5" stroke-linejoin="round"/>
<circle cx="40.3" cy="42.2" r="4.0" fill="none" stroke="#b6b6b6" stroke-width="1.5" stroke-linejoin="round"/>
<line x1="25.3" y1="63.6" x2="55.6" y2="61.0" stroke="#b6b6b6" stroke-width="2.6" stroke-linecap="round" opacity="0.8"/>
</g>
<path d="M292 421 C305 414.5 317 407.5 318.4 398.5 C319 392.5 316.5 387 314.4 380.2 C309.5 380.6 305.4 375.5 305.4 370.2 C305.4 366.2 307.8 363.8 311.2 364.2 C311.2 358 311.4 352 312.8 347 C316 337 325 331.2 335 331.2 C345 331.2 354 337 357.2 347 C358.6 352 358.8 358 358.8 364.2 C362.2 363.8 364.6 366.2 364.6 370.2 C364.6 375.5 360.5 380.6 355.6 380.2 C353.5 387 351 392.5 351.6 398.5 C353 407.5 365 414.5 378 421Z" fill="#1b1b1b" stroke="#f2f2f2" stroke-width="1.4"/>
</g>
<g transform="translate(256.3 533.3)">
<path d="M-49.14 -51.24A71 71 0 0 1 49.14 -51.24" fill="none" stroke="#161616" stroke-width="5.6" transform="translate(0 1.6)"/>
<rect x="-1.35" y="-1.7" width="2.7" height="3.4" fill="#78c8f5" transform="translate(-48.06 -50.66) rotate(-42.6)"/>
<rect x="-1.35" y="-1.7" width="2.7" height="3.4" fill="#7bcaf5" transform="translate(-44.87 -53.43) rotate(-39.19)"/>
<rect x="-1.35" y="-1.7" width="2.7" height="3.4" fill="#7eccf6" transform="translate(-41.52 -56) rotate(-35.78)"/>
<rect x="-1.35" y="-1.7" width="2.7" height="3.4" fill="#82cef7" transform="translate(-38.02 -58.36) rotate(-32.38)"/>
<rect x="-1.35" y="-1.7" width="2.7" height="3.4" fill="#85d0f8" transform="translate(-34.39 -60.52) rotate(-28.97)"/>
<rect x="-1.35" y="-1.7" width="2.7" height="3.4" fill="#88d2f9" transform="translate(-30.63 -62.45) rotate(-25.56)"/>
<rect x="-1.35" y="-1.7" width="2.7" height="3.4" fill="#8cd4fa" transform="translate(-26.77 -64.16) rotate(-22.15)"/>
<rect x="-1.35" y="-1.7" width="2.7" height="3.4" fill="#8fd6fa" transform="translate(-22.82 -65.63) rotate(-18.74)"/>
<rect x="-1.35" y="-1.7" width="2.7" height="3.4" fill="#92d8fb" transform="translate(-18.78 -66.87) rotate(-15.34)"/>
<rect x="-1.35" y="-1.7" width="2.7" height="3.4" fill="#96dafc" transform="translate(-14.67 -67.87) rotate(-11.93)"/>
<rect x="-1.35" y="-1.7" width="2.7" height="3.4" fill="#99dcfd" transform="translate(-10.52 -68.62) rotate(-8.52)"/>
<rect x="-1.35" y="-1.7" width="2.7" height="3.4" fill="#9cdefe" transform="translate(-6.33 -69.12) rotate(-5.11)"/>
<rect x="-1.35" y="-1.7" width="2.7" height="3.4" fill="#a0e1ff" transform="translate(-2.11 -69.37) rotate(-1.7)"/>
<rect x="-1.35" y="-1.7" width="2.7" height="3.4" fill="#3a3d40" transform="translate(2.11 -69.37) rotate(1.7)"/>
<rect x="-1.35" y="-1.7" width="2.7" height="3.4" fill="#3a3d40" transform="translate(6.33 -69.12) rotate(5.11)"/>
<rect x="-1.35" y="-1.7" width="2.7" height="3.4" fill="#3a3d40" transform="translate(10.52 -68.62) rotate(8.52)"/>
<rect x="-1.35" y="-1.7" width="2.7" height="3.4" fill="#3a3d40" transform="translate(14.67 -67.87) rotate(11.93)"/>
<rect x="-1.35" y="-1.7" width="2.7" height="3.4" fill="#3a3d40" transform="translate(18.78 -66.87) rotate(15.34)"/>
<rect x="-1.35" y="-1.7" width="2.7" height="3.4" fill="#3a3d40" transform="translate(22.82 -65.63) rotate(18.74)"/>
<rect x="-1.35" y="-1.7" width="2.7" height="3.4" fill="#3a3d40" transform="translate(26.77 -64.16) rotate(22.15)"/>
<rect x="-1.35" y="-1.7" width="2.7" height="3.4" fill="#3a3d40" transform="translate(30.63 -62.45) rotate(25.56)"/>
<rect x="-1.35" y="-1.7" width="2.7" height="3.4" fill="#3a3d40" transform="translate(34.39 -60.52) rotate(28.97)"/>
<rect x="-1.35" y="-1.7" width="2.7" height="3.4" fill="#3a3d40" transform="translate(38.02 -58.36) rotate(32.38)"/>
<rect x="-1.35" y="-1.7" width="2.7" height="3.4" fill="#3a3d40" transform="translate(41.52 -56) rotate(35.78)"/>
<rect x="-1.35" y="-1.7" width="2.7" height="3.4" fill="#3a3d40" transform="translate(44.87 -53.43) rotate(39.19)"/>
<rect x="-1.35" y="-1.7" width="2.7" height="3.4" fill="#3a3d40" transform="translate(48.06 -50.66) rotate(42.6)"/>
<g transform="scale(1)">
<circle cx="1.2" cy="2" r="36" fill="url(#kshadow)"/>
<circle r="33.5" fill="url(#cbase)" stroke="#1a1a1a" stroke-width="1.5"/>
<polygon points="-9,-62 8.9,-62 31.3,8.2 13,29 -11.2,29 -31,8.2" fill="#3c3c3c"/>
<polygon points="-9,-62 -5.3,-56.7 -21.9,10.3 -31,8.2" fill="url(#cleft)"/>
<polygon points="8.9,-62 31.3,8.2 21.7,10.3 5.7,-56.7" fill="url(#cright)"/>
<polygon points="-9,-62 8.9,-62 5.7,-56.7 -5.3,-56.7" fill="#a4a6a8"/>
<polygon points="-31,8.2 -21.9,10.3 -9,21.3 -11.2,29" fill="#8d8f91"/>
<polygon points="-11.2,29 -9,21.3 11.5,21.3 13,29" fill="#6d6f71"/>
<polygon points="31.3,8.2 13,29 11.5,21.3 21.7,10.3" fill="#55575a"/>
<polygon points="-5.3,-56.7 5.7,-56.7 21.7,10.3 11.5,21.3 -9,21.3 -21.9,10.3" fill="#1d1d1d"/>
<polygon points="-5.3,-56.7 0.2,-56.7 0.2,10.3 -21.9,10.3" fill="#303030"/>
<polygon points="-21.9,10.3 0.2,10.3 1,21.3 -9,21.3" fill="#232323"/>
<polygon points="0.2,10.3 21.7,10.3 11.5,21.3 1,21.3" fill="#151515"/>
<rect x="-2.4" y="-51.3" width="5.1" height="36.3" rx="1" fill="#8fcff8"/>
</g></g>
<g transform="translate(412.6 521.1)">
<path d="M-42.97 42.97A60.77 60.77 0 1 1 42.97 42.97" fill="none" stroke="#1b1b1b" stroke-width="1.45"/>
<circle cx="2.08" cy="2.86" r="49.53" fill="url(#kshadow)"/>
<circle r="45.37" fill="#1a1a1a"/>
<circle r="43.55" fill="url(#krim)"/>
<g transform="translate(0.78 -0.78) rotate(134)">
<circle r="40.26" fill="#1b1b1b"/>
<polygon points="15.69,-40.35 26.5,-31.73 36.9,-22.63 23.36,-14.31 7,-22.49" fill="#232323"/>
<polygon points="36.9,-22.63 39.7,-11.54 43.28,-0.67 26.32,-1.75 23.36,-14.31" fill="#1a1a1a"/>
<polygon points="43.28,-0.67 39.09,13.47 33.68,27.2 20.79,20.4 26.32,-1.75" fill="#252525"/>
<polygon points="33.68,27.2 22.71,34.54 11.62,41.7 3.52,23.71 20.79,20.4" fill="#3e3e3e"/>
<polygon points="11.62,41.7 -1.63,41.31 -14.86,40.66 -8.33,24.89 3.52,23.71" fill="#404040"/>
<polygon points="-14.86,40.66 -24.23,33.5 -33.96,26.85 -24.7,14.46 -8.33,24.89" fill="#404040"/>
<polygon points="-33.96,26.85 -38.68,14.59 -43.23,2.26 -26.53,4.68 -24.7,14.46" fill="#434343"/>
<polygon points="-43.23,2.26 -39.65,-11.7 -35.08,-25.36 -18.64,-16.13 -26.53,4.68" fill="#3c3c3c"/>
<polygon points="-35.08,-25.36 -23.53,-33.99 -11.38,-41.77 -3.7,-22.78 -18.64,-16.13" fill="#282828"/>
<polygon points="-11.38,-41.77 2.17,-41.29 15.69,-40.35 7,-22.49 -3.7,-22.78" fill="#191919"/>
<polygon points="7,-22.49 23.36,-14.31 0,0" fill="#252525"/>
<polygon points="23.36,-14.31 26.32,-1.75 0,0" fill="#1f1f1f"/>
<polygon points="26.32,-1.75 20.79,20.4 0,0" fill="#252525"/>
<polygon points="20.79,20.4 3.52,23.71 0,0" fill="#2f2f2f"/>
<polygon points="3.52,23.71 -8.33,24.89 0,0" fill="#333333"/>
<polygon points="-8.33,24.89 -24.7,14.46 0,0" fill="#2e2e2e"/>
<polygon points="-24.7,14.46 -26.53,4.68 0,0" fill="#2e2e2e"/>
<polygon points="-26.53,4.68 -18.64,-16.13 0,0" fill="#272727"/>
<polygon points="-18.64,-16.13 -3.7,-22.78 0,0" fill="#212121"/>
<polygon points="-3.7,-22.78 7,-22.49 0,0" fill="#212121"/>
<polygon points="2.42,-14.33 13.25,-6.39 10,10.01 -0.58,14.46 -11.4,5.85 -11.06,-8.54" fill="#212121"/>
<rect x="-2.47" y="-34.06" width="4.94" height="28.34" fill="#8fcff8"/>
</g>
</g>
<rect x="209" y="576.4" width="94.7" height="32.2" fill="url(#vb)"/>
<rect x="365" y="576.4" width="94.8" height="32.2" fill="url(#vb)"/>
<g transform="translate(208.6 619.5)">
<rect x="0" y="0" width="95.2" height="65" fill="#090909"/>
<rect x="1.7" y="1.7" width="91.8" height="61.6" fill="url(#btn)"/>
<polygon points="1.7,1.7 14.2,1.7 1.7,14.2" fill="#6a6a6a" opacity="0.85"/>
<polygon points="93.5,1.7 81,1.7 93.5,14.2" fill="#666" opacity="0.85"/>
<polygon points="93.5,63.3 81,63.3 93.5,50.8" fill="#0c0c0c" opacity="0.8"/>
<polygon points="1.7,63.3 14.2,63.3 1.7,50.8" fill="#1c1c1c" opacity="0.5"/>
</g>
<g transform="translate(364.8 619.5)">
<rect x="0" y="0" width="95.2" height="65" fill="#090909"/>
<rect x="1.7" y="1.7" width="91.8" height="61.6" fill="url(#btn)"/>
<polygon points="1.7,1.7 14.2,1.7 1.7,14.2" fill="#6a6a6a" opacity="0.85"/>
<polygon points="93.5,1.7 81,1.7 93.5,14.2" fill="#666" opacity="0.85"/>
<polygon points="93.5,63.3 81,63.3 93.5,50.8" fill="#0c0c0c" opacity="0.8"/>
<polygon points="1.7,63.3 14.2,63.3 1.7,50.8" fill="#1c1c1c" opacity="0.5"/>
</g>
<rect x="544" y="152.4" width="326.8" height="267.3" fill="url(#disp)"/>
<g clip-path="url(#cd2)">
<g transform="translate(644 226.1) scale(0.58 0.66)">
<polygon points="13.9,7.2 55.7,5.7 55.2,65 14.5,69.2" fill="none" stroke="#4a4a4a" stroke-width="1.6" stroke-linejoin="round"/>
<polygon points="0.3,1.7 39.8,0.3 55.7,5.7 13.9,7.2" fill="none" stroke="#4a4a4a" stroke-width="1.6" stroke-linejoin="round"/>
<polygon points="0.3,1.7 13.9,7.2 14.5,69.2 1.4,59.9" fill="none" stroke="#4a4a4a" stroke-width="1.6" stroke-linejoin="round"/>
<circle cx="24.5" cy="17.5" r="5.2" fill="none" stroke="#4a4a4a" stroke-width="3.4" opacity="0.8"/>
<circle cx="24.5" cy="17.5" r="1.8" fill="none" stroke="#4a4a4a" stroke-width="1.6" stroke-linejoin="round"/>
<ellipse cx="34.8" cy="41.9" rx="15.6" ry="16.6" fill="none" stroke="#4a4a4a" stroke-width="1.6" stroke-linejoin="round"/>
<ellipse cx="34.8" cy="41.9" rx="13.0" ry="13.8" fill="none" stroke="#4a4a4a" stroke-width="1.6" stroke-linejoin="round"/>
<circle cx="34.8" cy="41.9" r="4.0" fill="none" stroke="#4a4a4a" stroke-width="1.6" stroke-linejoin="round"/>
<line x1="18.8" y1="62.9" x2="51.2" y2="60.6" stroke="#4a4a4a" stroke-width="2.6" stroke-linecap="round" opacity="0.8"/>
</g>
<g transform="translate(627.9 253) scale(0.62 0.65)">
<polygon points="20.7,8.1 59.2,5.5 59.2,64.1 21.6,69.6" fill="none" stroke="#585858" stroke-width="1.6" stroke-linejoin="round"/>
<polygon points="0.3,2.6 37.2,0.3 59.2,5.5 20.7,8.1" fill="none" stroke="#585858" stroke-width="1.6" stroke-linejoin="round"/>
<polygon points="0.3,2.6 20.7,8.1 21.6,69.6 1.4,61.9" fill="none" stroke="#585858" stroke-width="1.6" stroke-linejoin="round"/>
<circle cx="31.3" cy="17.5" r="4.9" fill="none" stroke="#585858" stroke-width="3.3" opacity="0.8"/>
<circle cx="31.3" cy="17.5" r="1.7" fill="none" stroke="#585858" stroke-width="1.6" stroke-linejoin="round"/>
<ellipse cx="40.3" cy="42.2" rx="14.3" ry="16.6" fill="none" stroke="#585858" stroke-width="1.6" stroke-linejoin="round"/>
<ellipse cx="40.3" cy="42.2" rx="11.8" ry="13.8" fill="none" stroke="#585858" stroke-width="1.6" stroke-linejoin="round"/>
<circle cx="40.3" cy="42.2" r="4.0" fill="none" stroke="#585858" stroke-width="1.6" stroke-linejoin="round"/>
<line x1="25.3" y1="63.6" x2="55.6" y2="61.0" stroke="#585858" stroke-width="2.6" stroke-linecap="round" opacity="0.8"/>
</g>
<g transform="translate(737.1 220) scale(0.53 0.64)">
<polygon points="0,4.9 41.2,7.7 41.2,69.6 0.9,65.4" fill="none" stroke="#4a4a4a" stroke-width="1.6" stroke-linejoin="round"/>
<polygon points="20.2,0.2 60.8,2.5 41.2,7.7 0,4.9" fill="none" stroke="#4a4a4a" stroke-width="1.6" stroke-linejoin="round"/>
<polygon points="41.2,7.7 60.8,2.5 60.1,59.9 41.2,69.6" fill="none" stroke="#4a4a4a" stroke-width="1.6" stroke-linejoin="round"/>
<ellipse cx="20.2" cy="32.7" rx="15.2" ry="16.6" fill="none" stroke="#4a4a4a" stroke-width="1.6" stroke-linejoin="round"/>
<ellipse cx="20.2" cy="32.7" rx="12.6" ry="13.8" fill="none" stroke="#4a4a4a" stroke-width="1.6" stroke-linejoin="round"/>
<circle cx="20.2" cy="32.7" r="4.0" fill="none" stroke="#4a4a4a" stroke-width="1.6" stroke-linejoin="round"/>
<line x1="4.4" y1="10.6" x2="36.9" y2="12.8" stroke="#4a4a4a" stroke-width="2.6" stroke-linecap="round" opacity="0.8"/>
</g>
<g transform="translate(753.6 247.2) scale(0.58 0.63)">
<polygon points="0,4.9 41.2,7.7 41.2,69.6 0.9,65.4" fill="none" stroke="#585858" stroke-width="1.6" stroke-linejoin="round"/>
<polygon points="20.2,0.2 60.8,2.5 41.2,7.7 0,4.9" fill="none" stroke="#585858" stroke-width="1.6" stroke-linejoin="round"/>
<polygon points="41.2,7.7 60.8,2.5 60.1,59.9 41.2,69.6" fill="none" stroke="#585858" stroke-width="1.6" stroke-linejoin="round"/>
<ellipse cx="20.2" cy="32.7" rx="15.2" ry="16.6" fill="none" stroke="#585858" stroke-width="1.6" stroke-linejoin="round"/>
<ellipse cx="20.2" cy="32.7" rx="12.6" ry="13.8" fill="none" stroke="#585858" stroke-width="1.6" stroke-linejoin="round"/>
<circle cx="20.2" cy="32.7" r="4.0" fill="none" stroke="#585858" stroke-width="1.6" stroke-linejoin="round"/>
<line x1="4.4" y1="10.6" x2="36.9" y2="12.8" stroke="#585858" stroke-width="2.6" stroke-linecap="round" opacity="0.8"/>
</g>
<g transform="translate(599.2 284.3) scale(1 1)">
<polygon points="20.7,8.1 59.2,5.5 59.2,64.1 21.6,69.6" fill="none" stroke="#c6c6c6" stroke-width="1.5" stroke-linejoin="round"/>
<polygon points="0.3,2.6 37.2,0.3 59.2,5.5 20.7,8.1" fill="none" stroke="#c6c6c6" stroke-width="1.5" stroke-linejoin="round"/>
<polygon points="0.3,2.6 20.7,8.1 21.6,69.6 1.4,61.9" fill="none" stroke="#c6c6c6" stroke-width="1.5" stroke-linejoin="round"/>
<circle cx="31.3" cy="17.5" r="4.9" fill="none" stroke="#c6c6c6" stroke-width="3.3" opacity="0.8"/>
<circle cx="31.3" cy="17.5" r="1.7" fill="none" stroke="#c6c6c6" stroke-width="1.5" stroke-linejoin="round"/>
<ellipse cx="40.3" cy="42.2" rx="14.3" ry="16.6" fill="none" stroke="#c6c6c6" stroke-width="1.5" stroke-linejoin="round"/>
<ellipse cx="40.3" cy="42.2" rx="11.8" ry="13.8" fill="none" stroke="#c6c6c6" stroke-width="1.5" stroke-linejoin="round"/>
<circle cx="40.3" cy="42.2" r="4.0" fill="none" stroke="#c6c6c6" stroke-width="1.5" stroke-linejoin="round"/>
<line x1="25.3" y1="63.6" x2="55.6" y2="61.0" stroke="#c6c6c6" stroke-width="2.6" stroke-linecap="round" opacity="0.8"/>
</g>
<g transform="translate(762.2 279.3) scale(1 1)">
<polygon points="0,4.9 41.2,7.7 41.2,69.6 0.9,65.4" fill="none" stroke="#c6c6c6" stroke-width="1.5" stroke-linejoin="round"/>
<polygon points="20.2,0.2 60.8,2.5 41.2,7.7 0,4.9" fill="none" stroke="#c6c6c6" stroke-width="1.5" stroke-linejoin="round"/>
<polygon points="41.2,7.7 60.8,2.5 60.1,59.9 41.2,69.6" fill="none" stroke="#c6c6c6" stroke-width="1.5" stroke-linejoin="round"/>
<circle cx="30.3" cy="58.4" r="4.9" fill="none" stroke="#c6c6c6" stroke-width="3.3" opacity="0.8"/>
<circle cx="30.3" cy="58.4" r="1.7" fill="none" stroke="#c6c6c6" stroke-width="1.5" stroke-linejoin="round"/>
<ellipse cx="20.2" cy="32.7" rx="15.2" ry="16.6" fill="none" stroke="#c6c6c6" stroke-width="1.5" stroke-linejoin="round"/>
<ellipse cx="20.2" cy="32.7" rx="12.6" ry="13.8" fill="none" stroke="#c6c6c6" stroke-width="1.5" stroke-linejoin="round"/>
<circle cx="20.2" cy="32.7" r="4.0" fill="none" stroke="#c6c6c6" stroke-width="1.5" stroke-linejoin="round"/>
<line x1="4.4" y1="10.6" x2="36.9" y2="12.8" stroke="#c6c6c6" stroke-width="2.6" stroke-linecap="round" opacity="0.8"/>
</g>
<path d="M664 421 C677 414.5 689 407.5 690.4 398.5 C691 392.5 688.5 387 686.4 380.2 C681.5 380.6 677.4 375.5 677.4 370.2 C677.4 366.2 679.8 363.8 683.2 364.2 C683.2 358 683.4 352 684.8 347 C688 337 697 331.2 707 331.2 C717 331.2 726 337 729.2 347 C730.6 352 730.8 358 730.8 364.2 C734.2 363.8 736.6 366.2 736.6 370.2 C736.6 375.5 732.5 380.6 727.6 380.2 C725.5 387 723 392.5 723.6 398.5 C725 407.5 737 414.5 750 421Z" fill="#1b1b1b" stroke="#f2f2f2" stroke-width="1.4"/>
</g>
<g transform="translate(628.6 521.1)">
<path d="M-42.97 42.97A60.77 60.77 0 1 1 42.97 42.97" fill="none" stroke="#1b1b1b" stroke-width="1.45"/>
<circle cx="2.08" cy="2.86" r="49.53" fill="url(#kshadow)"/>
<circle r="45.37" fill="#1a1a1a"/>
<circle r="43.55" fill="url(#krim)"/>
<g transform="translate(0.78 -0.78) rotate(25)">
<circle r="40.26" fill="#1b1b1b"/>
<polygon points="20.57,-38.09 28.58,-29.87 37.15,-22.23 19.63,-12.18 15.69,-24.52" fill="#404040"/>
<polygon points="37.15,-22.23 40.76,-6.92 42.4,8.73 26.5,8.35 19.63,-12.18" fill="#202020"/>
<polygon points="42.4,8.73 37.03,18.39 32.57,28.51 18.6,21.4 26.5,8.35" fill="#1c1c1c"/>
<polygon points="32.57,28.51 19.98,36.19 6.76,42.76 6.16,22.78 18.6,21.4" fill="#171717"/>
<polygon points="6.76,42.76 -4.82,41.06 -16.48,40.03 -9.54,22.86 6.16,22.78" fill="#171717"/>
<polygon points="-16.48,40.03 -28.22,30.21 -38.81,19.18 -23.29,8 -9.54,22.86" fill="#242424"/>
<polygon points="-38.81,19.18 -40.62,7.69 -43.13,-3.66 -25.96,-3.96 -23.29,8" fill="#3d3d3d"/>
<polygon points="-43.13,-3.66 -37.45,-17.52 -30.45,-30.77 -17.9,-17.53 -25.96,-3.96" fill="#4b4b4b"/>
<polygon points="-30.45,-30.77 -18.53,-36.96 -6.44,-42.81 -5.81,-28.11 -17.9,-17.53" fill="#383838"/>
<polygon points="-6.44,-42.81 7.11,-40.73 20.57,-38.09 15.69,-24.52 -5.81,-28.11" fill="#3b3b3b"/>
<polygon points="15.69,-24.52 19.63,-12.18 0,0" fill="#272727"/>
<polygon points="19.63,-12.18 26.5,8.35 0,0" fill="#252525"/>
<polygon points="26.5,8.35 18.6,21.4 0,0" fill="#232323"/>
<polygon points="18.6,21.4 6.16,22.78 0,0" fill="#202020"/>
<polygon points="6.16,22.78 -9.54,22.86 0,0" fill="#242424"/>
<polygon points="-9.54,22.86 -23.29,8 0,0" fill="#232323"/>
<polygon points="-23.29,8 -25.96,-3.96 0,0" fill="#303030"/>
<polygon points="-25.96,-3.96 -17.9,-17.53 0,0" fill="#343434"/>
<polygon points="-17.9,-17.53 -5.81,-28.11 0,0" fill="#303030"/>
<polygon points="-5.81,-28.11 15.69,-24.52 0,0" fill="#2c2c2c"/>
<polygon points="1.78,-14.38 12.84,-6.51 8.81,8.12 -3.68,13.62 -14.24,3.62 -9.01,-8.66" fill="#212121"/>
<rect x="-2.47" y="-34.06" width="4.94" height="28.34" fill="#8fcff8"/>
</g>
</g>
<g transform="translate(783.4 521.1)">
<path d="M-42.97 42.97A60.77 60.77 0 1 1 42.97 42.97" fill="none" stroke="#1b1b1b" stroke-width="1.45"/>
<circle cx="2.08" cy="2.86" r="49.53" fill="url(#kshadow)"/>
<circle r="45.37" fill="#1a1a1a"/>
<circle r="43.55" fill="url(#krim)"/>
<g transform="translate(0.78 -0.78) rotate(-80)">
<circle r="40.26" fill="#1b1b1b"/>
<polygon points="-2.01,-43.24 11.72,-39.65 25.19,-35.21 14.77,-20.22 -3.65,-24.53" fill="#3c3c3c"/>
<polygon points="25.19,-35.21 33.76,-23.86 41.59,-12 27.87,-8.48 14.77,-20.22" fill="#3b3b3b"/>
<polygon points="41.59,-12 41.34,-0.19 41.71,11.61 23.24,5.86 27.87,-8.48" fill="#3a3a3a"/>
<polygon points="41.71,11.61 34.5,22.79 27.04,33.8 12.27,20.64 23.24,5.86" fill="#383838"/>
<polygon points="27.04,33.8 14.26,38.8 1.29,43.27 3.79,26.29 12.27,20.64" fill="#333333"/>
<polygon points="1.29,43.27 -13.05,39.23 -26.95,33.88 -13.48,22.59 3.79,26.29" fill="#222222"/>
<polygon points="-26.95,33.88 -33.47,24.26 -40.58,15.07 -28.33,6.72 -13.48,22.59" fill="#212121"/>
<polygon points="-40.58,15.07 -41.34,0 -40.58,-15.07 -26.81,-9.13 -28.33,6.72" fill="#232323"/>
<polygon points="-40.58,-15.07 -32.55,-25.48 -24.37,-35.78 -15.74,-19.38 -26.81,-9.13" fill="#232323"/>
<polygon points="-24.37,-35.78 -13.09,-39.21 -2.01,-43.24 -3.65,-24.53 -15.74,-19.38" fill="#343434"/>
<polygon points="-3.65,-24.53 14.77,-20.22 0,0" fill="#323232"/>
<polygon points="14.77,-20.22 27.87,-8.48 0,0" fill="#313131"/>
<polygon points="27.87,-8.48 23.24,5.86 0,0" fill="#2c2c2c"/>
<polygon points="23.24,5.86 12.27,20.64 0,0" fill="#272727"/>
<polygon points="12.27,20.64 3.79,26.29 0,0" fill="#232323"/>
<polygon points="3.79,26.29 -13.48,22.59 0,0" fill="#242424"/>
<polygon points="-13.48,22.59 -28.33,6.72 0,0" fill="#1e1e1e"/>
<polygon points="-28.33,6.72 -26.81,-9.13 0,0" fill="#1f1f1f"/>
<polygon points="-26.81,-9.13 -15.74,-19.38 0,0" fill="#272727"/>
<polygon points="-15.74,-19.38 -3.65,-24.53 0,0" fill="#282828"/>
<polygon points="3.26,-11.87 13.02,-6.78 9.69,9.99 -1.31,13.6 -13.53,3.96 -9.09,-8.25" fill="#212121"/>
<rect x="-2.47" y="-34.06" width="4.94" height="28.34" fill="#8fcff8"/>
</g>
</g>
<rect x="581" y="576.4" width="94.8" height="32.2" fill="url(#vb)"/>
<rect x="735.8" y="576.4" width="94.8" height="32.2" fill="url(#vb)"/>
<g transform="translate(580.8 619.5)">
<rect x="0" y="0" width="95.2" height="65" fill="#090909"/>
<rect x="1.7" y="1.7" width="91.8" height="61.6" fill="url(#btn)"/>
<polygon points="1.7,1.7 14.2,1.7 1.7,14.2" fill="#6a6a6a" opacity="0.85"/>
<polygon points="93.5,1.7 81,1.7 93.5,14.2" fill="#666" opacity="0.85"/>
<polygon points="93.5,63.3 81,63.3 93.5,50.8" fill="#0c0c0c" opacity="0.8"/>
<polygon points="1.7,63.3 14.2,63.3 1.7,50.8" fill="#1c1c1c" opacity="0.5"/>
</g>
<g transform="translate(735.6 619.5)">
<rect x="-0.5" y="-0.5" width="96.2" height="66" fill="#3d4a55" opacity="0.7"/>
<rect x="0" y="0" width="95.2" height="65" fill="#b4e1fb"/>
<rect x="2" y="2" width="91.2" height="61" fill="url(#btnon)"/>
<polygon points="2,2 14.5,2 2,14.5" fill="#565656" opacity="0.85"/>
<polygon points="93.2,2 80.7,2 93.2,14.5" fill="#525252" opacity="0.85"/>
<polygon points="93.2,63 80.7,63 93.2,50.5" fill="#080808" opacity="0.8"/>
<polygon points="2,63 14.5,63 2,50.5" fill="#1c1c1c" opacity="0.5"/>
</g>
<rect x="883.5" y="152.4" width="1.3" height="532.3" fill="#2a2a2a"/>
<rect x="1026.5" y="152.4" width="1.3" height="532.3" fill="#2a2a2a"/>
<g transform="translate(956.3 218.3)">
<path d="M-33.06 33.06A46.75 46.75 0 1 1 33.06 33.06" fill="none" stroke="#1b1b1b" stroke-width="1.25"/>
<circle cx="1.6" cy="2.2" r="38.1" fill="url(#kshadow)"/>
<circle r="34.9" fill="#1a1a1a"/>
<circle r="33.5" fill="url(#krim)"/>
<g transform="translate(0.6 -0.6) rotate(-124)">
<circle r="30.97" fill="#1b1b1b"/>
<polygon points="12.72,-30.78 21.13,-23.77 29.07,-16.24 17.54,-9.97 8.49,-17.34" fill="#333333"/>
<polygon points="29.07,-16.24 30.88,-7.59 33.29,0.9 20.72,3.26 17.54,-9.97" fill="#474747"/>
<polygon points="33.29,0.9 29.47,11.95 24.51,22.54 16.15,15.56 20.72,3.26" fill="#3b3b3b"/>
<polygon points="24.51,22.54 16.23,27.35 8.04,32.31 6.5,19.54 16.15,15.56" fill="#3f3f3f"/>
<polygon points="8.04,32.31 -2.75,31.68 -13.48,30.45 -7.56,15.72 6.5,19.54" fill="#343434"/>
<polygon points="-13.48,30.45 -20.5,24.31 -27.73,18.44 -16.62,10.86 -7.56,15.72" fill="#313131"/>
<polygon points="-27.73,18.44 -30.73,8.19 -33.23,-2.19 -18.64,0.64 -16.62,10.86" fill="#1c1c1c"/>
<polygon points="-33.23,-2.19 -29.6,-11.64 -25.82,-21.03 -16.41,-13.57 -18.64,0.64" fill="#232323"/>
<polygon points="-25.82,-21.03 -17.13,-26.79 -8.25,-32.26 -8.33,-20.45 -16.41,-13.57" fill="#202020"/>
<polygon points="-8.25,-32.26 2.25,-31.72 12.72,-30.78 8.49,-17.34 -8.33,-20.45" fill="#252525"/>
<polygon points="8.49,-17.34 17.54,-9.97 0,0" fill="#282828"/>
<polygon points="17.54,-9.97 20.72,3.26 0,0" fill="#343434"/>
<polygon points="20.72,3.26 16.15,15.56 0,0" fill="#323232"/>
<polygon points="16.15,15.56 6.5,19.54 0,0" fill="#303030"/>
<polygon points="6.5,19.54 -7.56,15.72 0,0" fill="#232323"/>
<polygon points="-7.56,15.72 -16.62,10.86 0,0" fill="#212121"/>
<polygon points="-16.62,10.86 -18.64,0.64 0,0" fill="#272727"/>
<polygon points="-18.64,0.64 -16.41,-13.57 0,0" fill="#272727"/>
<polygon points="-16.41,-13.57 -8.33,-20.45 0,0" fill="#202020"/>
<polygon points="-8.33,-20.45 8.49,-17.34 0,0" fill="#1f1f1f"/>
<polygon points="2.28,-8.91 8.76,-4.1 7.84,6.28 -1.05,9.6 -9.57,2.92 -7.39,-5.77" fill="#212121"/>
<rect x="-1.9" y="-26.2" width="3.8" height="21.8" fill="#8fcff8"/>
</g>
</g>
<rect x="908.8" y="260.6" width="94.9" height="32.2" fill="url(#vb)"/>
<g transform="translate(956.3 375.7)">
<path d="M-33.06 33.06A46.75 46.75 0 1 1 33.06 33.06" fill="none" stroke="#1b1b1b" stroke-width="1.25"/>
<circle cx="1.6" cy="2.2" r="38.1" fill="url(#kshadow)"/>
<circle r="34.9" fill="#1a1a1a"/>
<circle r="33.5" fill="url(#krim)"/>
<g transform="translate(0.6 -0.6) rotate(-47)">
<circle r="30.97" fill="#1b1b1b"/>
<polygon points="5.61,-32.82 13.97,-28.57 22.47,-24.57 10.87,-14.64 4.51,-21.77" fill="#434343"/>
<polygon points="22.47,-24.57 27.94,-15.19 32.84,-5.5 18.59,-1.56 10.87,-14.64" fill="#353535"/>
<polygon points="32.84,-5.5 31.53,4.11 30.33,13.74 18.91,10.12 18.59,-1.56" fill="#3b3b3b"/>
<polygon points="30.33,13.74 23.59,21.33 16.71,28.8 12.79,18.44 18.91,10.12" fill="#343434"/>
<polygon points="16.71,28.8 6.09,31.21 -4.67,32.97 -4.2,17.31 12.79,18.44" fill="#1c1c1c"/>
<polygon points="-4.67,32.97 -13.64,28.73 -22.6,24.46 -12.84,12.32 -4.2,17.31" fill="#1b1b1b"/>
<polygon points="-22.6,24.46 -27.95,15.17 -32.82,5.62 -20.44,6.06 -12.84,12.32" fill="#212121"/>
<polygon points="-32.82,5.62 -31.32,-5.53 -28.92,-16.52 -16.74,-9 -20.44,6.06" fill="#181818"/>
<polygon points="-28.92,-16.52 -22.52,-22.45 -16.61,-28.86 -8.71,-17.31 -16.74,-9" fill="#303030"/>
<polygon points="-16.61,-28.86 -5.59,-31.31 5.61,-32.82 4.51,-21.77 -8.71,-17.31" fill="#3c3c3c"/>
<polygon points="4.51,-21.77 10.87,-14.64 0,0" fill="#313131"/>
<polygon points="10.87,-14.64 18.59,-1.56 0,0" fill="#323232"/>
<polygon points="18.59,-1.56 18.91,10.12 0,0" fill="#252525"/>
<polygon points="18.91,10.12 12.79,18.44 0,0" fill="#1e1e1e"/>
<polygon points="12.79,18.44 -4.2,17.31 0,0" fill="#262626"/>
<polygon points="-4.2,17.31 -12.84,12.32 0,0" fill="#242424"/>
<polygon points="-12.84,12.32 -20.44,6.06 0,0" fill="#232323"/>
<polygon points="-20.44,6.06 -16.74,-9 0,0" fill="#202020"/>
<polygon points="-16.74,-9 -8.71,-17.31 0,0" fill="#282828"/>
<polygon points="-8.71,-17.31 4.51,-21.77 0,0" fill="#2e2e2e"/>
<polygon points="2.66,-10.71 10.21,-2.57 7.57,7.56 -2.09,10.28 -8.88,2.12 -8.8,-6.79" fill="#212121"/>
<rect x="-1.9" y="-26.2" width="3.8" height="21.8" fill="#8fcff8"/>
</g>
</g>
<rect x="908.8" y="418.4" width="94.9" height="32.2" fill="url(#vb)"/>
<g transform="translate(956.3 533.9)">
<path d="M-33.06 33.06A46.75 46.75 0 1 1 33.06 33.06" fill="none" stroke="#1b1b1b" stroke-width="1.25"/>
<circle cx="1.6" cy="2.2" r="38.1" fill="url(#kshadow)"/>
<circle r="34.9" fill="#1a1a1a"/>
<circle r="33.5" fill="url(#krim)"/>
<g transform="translate(0.6 -0.6) rotate(134)">
<circle r="30.97" fill="#1b1b1b"/>
<polygon points="17.48,-28.35 25.18,-19.43 31.85,-9.72 21.15,-5.62 9.53,-17.05" fill="#1c1c1c"/>
<polygon points="31.85,-9.72 31.8,0.03 31.83,9.79 21.79,3.7 21.15,-5.62" fill="#1b1b1b"/>
<polygon points="31.83,9.79 25.42,19.1 18.26,27.85 12.68,18.08 21.79,3.7" fill="#272727"/>
<polygon points="18.26,27.85 9.5,30.35 0.89,33.29 3.63,22.07 12.68,18.08" fill="#3a3a3a"/>
<polygon points="0.89,33.29 -10.1,30.15 -20.76,26.03 -10.71,17.35 3.63,22.07" fill="#3d3d3d"/>
<polygon points="-20.76,26.03 -25.58,18.9 -30.98,12.21 -18.65,9.41 -10.71,17.35" fill="#373737"/>
<polygon points="-30.98,12.21 -31.8,0.09 -31.05,-12.03 -21.07,-6.39 -18.65,9.41" fill="#3c3c3c"/>
<polygon points="-31.05,-12.03 -25.45,-19.07 -20.26,-26.43 -13.28,-15.24 -21.07,-6.39" fill="#313131"/>
<polygon points="-20.26,-26.43 -11.08,-29.81 -1.93,-33.24 0.36,-18.07 -13.28,-15.24" fill="#232323"/>
<polygon points="-1.93,-33.24 7.79,-30.83 17.48,-28.35 9.53,-17.05 0.36,-18.07" fill="#1b1b1b"/>
<polygon points="9.53,-17.05 21.15,-5.62 0,0" fill="#232323"/>
<polygon points="21.15,-5.62 21.79,3.7 0,0" fill="#252525"/>
<polygon points="21.79,3.7 12.68,18.08 0,0" fill="#2a2a2a"/>
<polygon points="12.68,18.08 3.63,22.07 0,0" fill="#2c2c2c"/>
<polygon points="3.63,22.07 -10.71,17.35 0,0" fill="#373737"/>
<polygon points="-10.71,17.35 -18.65,9.41 0,0" fill="#343434"/>
<polygon points="-18.65,9.41 -21.07,-6.39 0,0" fill="#2b2b2b"/>
<polygon points="-21.07,-6.39 -13.28,-15.24 0,0" fill="#222222"/>
<polygon points="-13.28,-15.24 0.36,-18.07 0,0" fill="#272727"/>
<polygon points="0.36,-18.07 9.53,-17.05 0,0" fill="#262626"/>
<polygon points="1.86,-10.03 8.42,-4.2 6.87,6.44 -2.36,10.63 -8.85,4.62 -6.64,-6.08" fill="#212121"/>
<rect x="-1.9" y="-26.2" width="3.8" height="21.8" fill="#8fcff8"/>
</g>
</g>
<rect x="908.8" y="576.5" width="94.9" height="32.2" fill="url(#vb)"/>
<g transform="translate(908.7 619.6)">
<rect x="-0.5" y="-0.5" width="96.1" height="66" fill="#3d4a55" opacity="0.7"/>
<rect x="0" y="0" width="95.1" height="65" fill="#b4e1fb"/>
<rect x="2" y="2" width="91.1" height="61" fill="url(#btnon)"/>
<polygon points="2,2 14.5,2 2,14.5" fill="#565656" opacity="0.85"/>
<polygon points="93.1,2 80.6,2 93.1,14.5" fill="#525252" opacity="0.85"/>
<polygon points="93.1,63 80.6,63 93.1,50.5" fill="#080808" opacity="0.8"/>
<polygon points="2,63 14.5,63 2,50.5" fill="#1c1c1c" opacity="0.5"/>
</g>
<g transform="translate(1099.2 218.3)">
<path d="M-33.06 33.06A46.75 46.75 0 1 1 33.06 33.06" fill="none" stroke="#1b1b1b" stroke-width="1.25"/>
<circle cx="1.6" cy="2.2" r="38.1" fill="url(#kshadow)"/>
<circle r="34.9" fill="#1a1a1a"/>
<circle r="33.5" fill="url(#krim)"/>
<g transform="translate(0.6 -0.6) rotate(-133)">
<circle r="30.97" fill="#1b1b1b"/>
<polygon points="6.66,-32.63 15.7,-27.66 24.6,-22.44 14.89,-11.71 4.58,-21.34" fill="#262626"/>
<polygon points="24.6,-22.44 28.06,-14.96 32.35,-7.91 17.28,-3.08 14.89,-11.71" fill="#3f3f3f"/>
<polygon points="32.35,-7.91 31.53,4.18 29.17,16.07 19.1,9.43 17.28,-3.08" fill="#494949"/>
<polygon points="29.17,16.07 21.96,23 14.71,29.88 8.1,18.63 19.1,9.43" fill="#363636"/>
<polygon points="14.71,29.88 4.62,31.46 -5.5,32.84 -6.57,21.48 8.1,18.63" fill="#3d3d3d"/>
<polygon points="-5.5,32.84 -13.36,28.86 -21.47,25.45 -13.53,12.86 -6.57,21.48" fill="#3a3a3a"/>
<polygon points="-21.47,25.45 -27.93,15.21 -33.03,4.23 -17.79,0.24 -13.53,12.86" fill="#262626"/>
<polygon points="-33.03,4.23 -31.42,-4.92 -30.16,-14.12 -19.32,-6.54 -17.79,0.24" fill="#1c1c1c"/>
<polygon points="-30.16,-14.12 -22.56,-22.41 -14.32,-30.06 -8.6,-20.05 -19.32,-6.54" fill="#1f1f1f"/>
<polygon points="-14.32,-30.06 -3.86,-31.57 6.66,-32.63 4.58,-21.34 -8.6,-20.05" fill="#212121"/>
<polygon points="4.58,-21.34 14.89,-11.71 0,0" fill="#252525"/>
<polygon points="14.89,-11.71 17.28,-3.08 0,0" fill="#2c2c2c"/>
<polygon points="17.28,-3.08 19.1,9.43 0,0" fill="#2f2f2f"/>
<polygon points="19.1,9.43 8.1,18.63 0,0" fill="#303030"/>
<polygon points="8.1,18.63 -6.57,21.48 0,0" fill="#242424"/>
<polygon points="-6.57,21.48 -13.53,12.86 0,0" fill="#222222"/>
<polygon points="-13.53,12.86 -17.79,0.24 0,0" fill="#232323"/>
<polygon points="-17.79,0.24 -19.32,-6.54 0,0" fill="#222222"/>
<polygon points="-19.32,-6.54 -8.6,-20.05 0,0" fill="#242424"/>
<polygon points="-8.6,-20.05 4.58,-21.34 0,0" fill="#232323"/>
<polygon points="0.68,-10.48 8.79,-4.28 7.09,6.96 -1.84,9.87 -8.96,3.21 -8.86,-7.02" fill="#212121"/>
<rect x="-1.9" y="-26.2" width="3.8" height="21.8" fill="#8fcff8"/>
</g>
</g>
<rect x="1051.7" y="260.6" width="94.9" height="32.2" fill="url(#vb)"/>
<g transform="translate(1099.2 428)">
<path d="M-33.06 33.06A46.75 46.75 0 1 1 33.06 33.06" fill="none" stroke="#1b1b1b" stroke-width="1.25"/>
<circle cx="1.6" cy="2.2" r="38.1" fill="url(#kshadow)"/>
<circle r="34.9" fill="#1a1a1a"/>
<circle r="33.5" fill="url(#krim)"/>
<g transform="translate(0.6 -0.6) rotate(0)">
<circle r="30.97" fill="#1b1b1b"/>
<polygon points="1.18,-33.28 10.5,-30.02 19.82,-26.76 12.67,-14.54 -1.54,-22.48" fill="#3b3b3b"/>
<polygon points="19.82,-26.76 26.15,-18.1 32.03,-9.11 20.29,-8.52 12.67,-14.54" fill="#3e3e3e"/>
<polygon points="32.03,-9.11 31.79,0.75 31.56,10.62 20.24,5.96 20.29,-8.52" fill="#2f2f2f"/>
<polygon points="31.56,10.62 24.71,20.02 16.93,28.67 12.33,17.04 20.24,5.96" fill="#171717"/>
<polygon points="16.93,28.67 7.57,30.89 -1.76,33.25 -2.62,22.37 12.33,17.04" fill="#212121"/>
<polygon points="-1.76,33.25 -11.79,29.53 -21.63,25.32 -11.79,14.14 -2.62,22.37" fill="#1b1b1b"/>
<polygon points="-21.63,25.32 -27.33,16.27 -32.57,6.95 -18.6,3.94 -11.79,14.14" fill="#1f1f1f"/>
<polygon points="-32.57,6.95 -31.71,-2.35 -31.19,-11.67 -18.57,-7.12 -18.6,3.94" fill="#333333"/>
<polygon points="-31.19,-11.67 -24.92,-19.75 -18.48,-27.7 -8.96,-16.7 -18.57,-7.12" fill="#414141"/>
<polygon points="-18.48,-27.7 -8.68,-30.59 1.18,-33.28 -1.54,-22.48 -8.96,-16.7" fill="#464646"/>
<polygon points="-1.54,-22.48 12.67,-14.54 0,0" fill="#323232"/>
<polygon points="12.67,-14.54 20.29,-8.52 0,0" fill="#212121"/>
<polygon points="20.29,-8.52 20.24,5.96 0,0" fill="#272727"/>
<polygon points="20.24,5.96 12.33,17.04 0,0" fill="#262626"/>
<polygon points="12.33,17.04 -2.62,22.37 0,0" fill="#262626"/>
<polygon points="-2.62,22.37 -11.79,14.14 0,0" fill="#202020"/>
<polygon points="-11.79,14.14 -18.6,3.94 0,0" fill="#262626"/>
<polygon points="-18.6,3.94 -18.57,-7.12 0,0" fill="#2c2c2c"/>
<polygon points="-18.57,-7.12 -8.96,-16.7 0,0" fill="#313131"/>
<polygon points="-8.96,-16.7 -1.54,-22.48 0,0" fill="#2d2d2d"/>
<polygon points="0.87,-9.63 10.88,-2.41 7.84,7.76 -1.21,9.86 -8.79,4.62 -7.14,-5.9" fill="#212121"/>
<rect x="-1.9" y="-26.2" width="3.8" height="21.8" fill="#8fcff8"/>
</g>
</g>
<rect x="1051.7" y="470.7" width="94.9" height="32.2" fill="url(#vb)"/>
<g transform="translate(1051.7 619.6)">
<rect x="-0.5" y="-0.5" width="96.1" height="66" fill="#3d4a55" opacity="0.7"/>
<rect x="0" y="0" width="95.1" height="65" fill="#b4e1fb"/>
<rect x="2" y="2" width="91.1" height="61" fill="url(#btnon)"/>
<polygon points="2,2 14.5,2 2,14.5" fill="#565656" opacity="0.85"/>
<polygon points="93.1,2 80.6,2 93.1,14.5" fill="#525252" opacity="0.85"/>
<polygon points="93.1,63 80.6,63 93.1,50.5" fill="#080808" opacity="0.8"/>
<polygon points="2,63 14.5,63 2,50.5" fill="#1c1c1c" opacity="0.5"/>
</g>
<g transform="translate(1218.5 322.4)">
<path d="M-33.06 33.06A46.75 46.75 0 1 1 33.06 33.06" fill="none" stroke="#1b1b1b" stroke-width="1.25"/>
<circle cx="1.6" cy="2.2" r="38.1" fill="url(#kshadow)"/>
<circle r="34.9" fill="#1a1a1a"/>
<circle r="33.5" fill="url(#krim)"/>
<g transform="translate(0.6 -0.6) rotate(0)">
<circle r="30.97" fill="#1b1b1b"/>
<polygon points="5.83,-32.78 15.1,-27.99 24.19,-22.89 13.8,-14.18 0.95,-21.85" fill="#404040"/>
<polygon points="24.19,-22.89 28.63,-13.85 32.96,-4.77 21.27,-3.55 13.8,-14.18" fill="#3a3a3a"/>
<polygon points="32.96,-4.77 31.29,5.67 29.19,16.03 19.15,10.89 21.27,-3.55" fill="#2c2c2c"/>
<polygon points="29.19,16.03 21.94,23.02 14.61,29.92 10.19,19.93 19.15,10.89" fill="#181818"/>
<polygon points="14.61,29.92 4.37,31.5 -5.91,32.77 -5.08,17.83 10.19,19.93" fill="#212121"/>
<polygon points="-5.91,32.77 -14.41,28.35 -23,24.08 -14.29,11.7 -5.08,17.83" fill="#181818"/>
<polygon points="-23,24.08 -27.9,15.26 -32.68,6.38 -21.27,3.73 -14.29,11.7" fill="#1f1f1f"/>
<polygon points="-32.68,6.38 -31.53,-4.17 -29.9,-14.66 -17.47,-6.83 -21.27,3.73" fill="#3b3b3b"/>
<polygon points="-29.9,-14.66 -22.01,-22.96 -13.38,-30.49 -5.71,-17.89 -17.47,-6.83" fill="#424242"/>
<polygon points="-13.38,-30.49 -3.76,-31.58 5.83,-32.78 0.95,-21.85 -5.71,-17.89" fill="#383838"/>
<polygon points="0.95,-21.85 13.8,-14.18 0,0" fill="#2e2e2e"/>
<polygon points="13.8,-14.18 21.27,-3.55 0,0" fill="#1e1e1e"/>
<polygon points="21.27,-3.55 19.15,10.89 0,0" fill="#222222"/>
<polygon points="19.15,10.89 10.19,19.93 0,0" fill="#212121"/>
<polygon points="10.19,19.93 -5.08,17.83 0,0" fill="#222222"/>
<polygon points="-5.08,17.83 -14.29,11.7 0,0" fill="#1f1f1f"/>
<polygon points="-14.29,11.7 -21.27,3.73 0,0" fill="#282828"/>
<polygon points="-21.27,3.73 -17.47,-6.83 0,0" fill="#2f2f2f"/>
<polygon points="-17.47,-6.83 -5.71,-17.89 0,0" fill="#333333"/>
<polygon points="-5.71,-17.89 0.95,-21.85 0,0" fill="#2f2f2f"/>
<polygon points="2.23,-8.83 8.63,-4.08 8.7,5.73 -0.62,10.8 -10.13,4.92 -7.2,-5.92" fill="#212121"/>
<rect x="-1.9" y="-26.2" width="3.8" height="21.8" fill="#8fcff8"/>
</g>
</g>
<rect x="1169.4" y="365" width="94.8" height="32.3" fill="url(#vb)"/>
<g transform="translate(1218.5 533.9)">
<path d="M-33.06 33.06A46.75 46.75 0 1 1 33.06 33.06" fill="none" stroke="#1b1b1b" stroke-width="1.25"/>
<circle cx="1.6" cy="2.2" r="38.1" fill="url(#kshadow)"/>
<circle r="34.9" fill="#1a1a1a"/>
<circle r="33.5" fill="url(#krim)"/>
<g transform="translate(0.6 -0.6) rotate(-131)">
<circle r="30.97" fill="#1b1b1b"/>
<polygon points="1.61,-33.26 12.61,-29.19 23.12,-23.97 12.99,-11.68 -0.25,-17.75" fill="#292929"/>
<polygon points="23.12,-23.97 27.75,-15.53 32.52,-7.16 18.66,-2.3 12.99,-11.68" fill="#444444"/>
<polygon points="32.52,-7.16 31.7,2.52 30.98,12.21 19.03,7.58 18.66,-2.3" fill="#434343"/>
<polygon points="30.98,12.21 24.46,20.32 17.68,28.22 9.05,18.73 19.03,7.58" fill="#444444"/>
<polygon points="17.68,28.22 7.28,30.96 -3.25,33.14 0.49,21.64 9.05,18.73" fill="#424242"/>
<polygon points="-3.25,33.14 -12.29,29.33 -21.35,25.56 -12.91,14 0.49,21.64" fill="#323232"/>
<polygon points="-21.35,25.56 -27.37,16.19 -32.68,6.39 -20.08,5.4 -12.91,14" fill="#252525"/>
<polygon points="-32.68,6.39 -31.7,-2.54 -31.25,-11.52 -21.72,-5.92 -20.08,5.4" fill="#171717"/>
<polygon points="-31.25,-11.52 -24.64,-20.1 -17.57,-28.29 -11.52,-19.22 -21.72,-5.92" fill="#1f1f1f"/>
<polygon points="-17.57,-28.29 -7.98,-30.78 1.61,-33.26 -0.25,-17.75 -11.52,-19.22" fill="#171717"/>
<polygon points="-0.25,-17.75 12.99,-11.68 0,0" fill="#2a2a2a"/>
<polygon points="12.99,-11.68 18.66,-2.3 0,0" fill="#2d2d2d"/>
<polygon points="18.66,-2.3 19.03,7.58 0,0" fill="#323232"/>
<polygon points="19.03,7.58 9.05,18.73 0,0" fill="#2b2b2b"/>
<polygon points="9.05,18.73 0.49,21.64 0,0" fill="#2a2a2a"/>
<polygon points="0.49,21.64 -12.91,14 0,0" fill="#252525"/>
<polygon points="-12.91,14 -20.08,5.4 0,0" fill="#262626"/>
<polygon points="-20.08,5.4 -21.72,-5.92 0,0" fill="#1f1f1f"/>
<polygon points="-21.72,-5.92 -11.52,-19.22 0,0" fill="#202020"/>
<polygon points="-11.52,-19.22 -0.25,-17.75 0,0" fill="#212121"/>
<polygon points="1.25,-9.39 8.96,-2.99 7.6,6.66 -2.81,9.26 -9.03,1.94 -7.86,-7.6" fill="#212121"/>
<rect x="-1.9" y="-26.2" width="3.8" height="21.8" fill="#8fcff8"/>
</g>
</g>
<rect x="1169.4" y="576.5" width="94.8" height="32.2" fill="url(#vb)"/>
<rect x="1358.5" y="203.3" width="6.2" height="22.8" fill="#101010"/>
<rect x="1359.4" y="204.3" width="4.4" height="20.8" fill="#252525"/>
<rect x="1358.5" y="233.2" width="6.2" height="150.6" fill="#121212"/>
<rect x="1359.9" y="236.4" width="3.4" height="2.4" rx="0.9" fill="#232323"/>
<rect x="1359.9" y="240.84" width="3.4" height="2.4" rx="0.9" fill="#232323"/>
<rect x="1359.9" y="245.28" width="3.4" height="2.4" rx="0.9" fill="#232323"/>
<rect x="1359.9" y="249.72" width="3.4" height="2.4" rx="0.9" fill="#232323"/>
<rect x="1359.9" y="254.16" width="3.4" height="2.4" rx="0.9" fill="#232323"/>
<rect x="1359.9" y="258.6" width="3.4" height="2.4" rx="0.9" fill="#232323"/>
<rect x="1359.9" y="263.04" width="3.4" height="2.4" rx="0.9" fill="#8fd0f2"/>
<rect x="1359.9" y="267.48" width="3.4" height="2.4" rx="0.9" fill="#8fd0f2"/>
<rect x="1359.9" y="271.92" width="3.4" height="2.4" rx="0.9" fill="#8fd0f2"/>
<rect x="1359.9" y="276.36" width="3.4" height="2.4" rx="0.9" fill="#8fd0f2"/>
<rect x="1359.9" y="280.8" width="3.4" height="2.4" rx="0.9" fill="#8fd0f2"/>
<rect x="1359.9" y="285.24" width="3.4" height="2.4" rx="0.9" fill="#8fd0f2"/>
<rect x="1359.9" y="289.68" width="3.4" height="2.4" rx="0.9" fill="#8fd0f2"/>
<rect x="1359.9" y="294.12" width="3.4" height="2.4" rx="0.9" fill="#8fd0f2"/>
<rect x="1359.9" y="298.56" width="3.4" height="2.4" rx="0.9" fill="#8fd0f2"/>
<rect x="1359.9" y="303" width="3.4" height="2.4" rx="0.9" fill="#8fd0f2"/>
<rect x="1359.9" y="307.44" width="3.4" height="2.4" rx="0.9" fill="#8fd0f2"/>
<rect x="1359.9" y="311.88" width="3.4" height="2.4" rx="0.9" fill="#8fd0f2"/>
<rect x="1359.9" y="316.32" width="3.4" height="2.4" rx="0.9" fill="#8fd0f2"/>
<rect x="1359.9" y="320.76" width="3.4" height="2.4" rx="0.9" fill="#8fd0f2"/>
<rect x="1359.9" y="325.2" width="3.4" height="2.4" rx="0.9" fill="#8fd0f2"/>
<rect x="1359.9" y="329.64" width="3.4" height="2.4" rx="0.9" fill="#8fd0f2"/>
<rect x="1359.9" y="334.08" width="3.4" height="2.4" rx="0.9" fill="#8fd0f2"/>
<rect x="1359.9" y="338.52" width="3.4" height="2.4" rx="0.9" fill="#8fd0f2"/>
<rect x="1359.9" y="342.96" width="3.4" height="2.4" rx="0.9" fill="#8fd0f2"/>
<rect x="1359.9" y="347.4" width="3.4" height="2.4" rx="0.9" fill="#8fd0f2"/>
<rect x="1359.9" y="351.84" width="3.4" height="2.4" rx="0.9" fill="#8fd0f2"/>
<rect x="1359.9" y="356.28" width="3.4" height="2.4" rx="0.9" fill="#8fd0f2"/>
<rect x="1359.9" y="360.72" width="3.4" height="2.4" rx="0.9" fill="#8fd0f2"/>
<rect x="1359.9" y="365.16" width="3.4" height="2.4" rx="0.9" fill="#8fd0f2"/>
<rect x="1359.9" y="369.6" width="3.4" height="2.4" rx="0.9" fill="#8fd0f2"/>
<rect x="1359.9" y="374.04" width="3.4" height="2.4" rx="0.9" fill="#8fd0f2"/>
<rect x="1359.9" y="378.48" width="3.4" height="2.4" rx="0.9" fill="#8fd0f2"/>
<rect x="1370.4" y="203.3" width="6.2" height="22.8" fill="#101010"/>
<rect x="1371.3" y="204.3" width="4.4" height="20.8" fill="#252525"/>
<rect x="1370.4" y="233.2" width="6.2" height="150.6" fill="#121212"/>
<rect x="1371.8" y="236.4" width="3.4" height="2.4" rx="0.9" fill="#232323"/>
<rect x="1371.8" y="240.84" width="3.4" height="2.4" rx="0.9" fill="#232323"/>
<rect x="1371.8" y="245.28" width="3.4" height="2.4" rx="0.9" fill="#232323"/>
<rect x="1371.8" y="249.72" width="3.4" height="2.4" rx="0.9" fill="#232323"/>
<rect x="1371.8" y="254.16" width="3.4" height="2.4" rx="0.9" fill="#232323"/>
<rect x="1371.8" y="258.6" width="3.4" height="2.4" rx="0.9" fill="#232323"/>
<rect x="1371.8" y="263.04" width="3.4" height="2.4" rx="0.9" fill="#8fd0f2"/>
<rect x="1371.8" y="267.48" width="3.4" height="2.4" rx="0.9" fill="#8fd0f2"/>
<rect x="1371.8" y="271.92" width="3.4" height="2.4" rx="0.9" fill="#8fd0f2"/>
<rect x="1371.8" y="276.36" width="3.4" height="2.4" rx="0.9" fill="#8fd0f2"/>
<rect x="1371.8" y="280.8" width="3.4" height="2.4" rx="0.9" fill="#8fd0f2"/>
<rect x="1371.8" y="285.24" width="3.4" height="2.4" rx="0.9" fill="#8fd0f2"/>
<rect x="1371.8" y="289.68" width="3.4" height="2.4" rx="0.9" fill="#8fd0f2"/>
<rect x="1371.8" y="294.12" width="3.4" height="2.4" rx="0.9" fill="#8fd0f2"/>
<rect x="1371.8" y="298.56" width="3.4" height="2.4" rx="0.9" fill="#8fd0f2"/>
<rect x="1371.8" y="303" width="3.4" height="2.4" rx="0.9" fill="#8fd0f2"/>
<rect x="1371.8" y="307.44" width="3.4" height="2.4" rx="0.9" fill="#8fd0f2"/>
<rect x="1371.8" y="311.88" width="3.4" height="2.4" rx="0.9" fill="#8fd0f2"/>
<rect x="1371.8" y="316.32" width="3.4" height="2.4" rx="0.9" fill="#8fd0f2"/>
<rect x="1371.8" y="320.76" width="3.4" height="2.4" rx="0.9" fill="#8fd0f2"/>
<rect x="1371.8" y="325.2" width="3.4" height="2.4" rx="0.9" fill="#8fd0f2"/>
<rect x="1371.8" y="329.64" width="3.4" height="2.4" rx="0.9" fill="#8fd0f2"/>
<rect x="1371.8" y="334.08" width="3.4" height="2.4" rx="0.9" fill="#8fd0f2"/>
<rect x="1371.8" y="338.52" width="3.4" height="2.4" rx="0.9" fill="#8fd0f2"/>
<rect x="1371.8" y="342.96" width="3.4" height="2.4" rx="0.9" fill="#8fd0f2"/>
<rect x="1371.8" y="347.4" width="3.4" height="2.4" rx="0.9" fill="#8fd0f2"/>
<rect x="1371.8" y="351.84" width="3.4" height="2.4" rx="0.9" fill="#8fd0f2"/>
<rect x="1371.8" y="356.28" width="3.4" height="2.4" rx="0.9" fill="#8fd0f2"/>
<rect x="1371.8" y="360.72" width="3.4" height="2.4" rx="0.9" fill="#8fd0f2"/>
<rect x="1371.8" y="365.16" width="3.4" height="2.4" rx="0.9" fill="#8fd0f2"/>
<rect x="1371.8" y="369.6" width="3.4" height="2.4" rx="0.9" fill="#8fd0f2"/>
<rect x="1371.8" y="374.04" width="3.4" height="2.4" rx="0.9" fill="#8fd0f2"/>
<rect x="1371.8" y="378.48" width="3.4" height="2.4" rx="0.9" fill="#8fd0f2"/>
<g transform="translate(1367.4 533.8)">
<path d="M-33.06 33.06A46.75 46.75 0 1 1 33.06 33.06" fill="none" stroke="#1b1b1b" stroke-width="1.25"/>
<circle cx="1.6" cy="2.2" r="38.1" fill="url(#kshadow)"/>
<circle r="34.9" fill="#1a1a1a"/>
<circle r="33.5" fill="url(#krim)"/>
<g transform="translate(0.6 -0.6) rotate(12)">
<circle r="30.97" fill="#1b1b1b"/>
<polygon points="9.56,-31.9 18.38,-25.95 26.91,-19.61 16.65,-12.59 2.78,-17.8" fill="#414141"/>
<polygon points="26.91,-19.61 30.33,-9.55 33.29,0.66 18.71,2.79 16.65,-12.59" fill="#2b2b2b"/>
<polygon points="33.29,0.66 30.33,9.55 27.67,18.53 17.59,11.46 18.71,2.79" fill="#272727"/>
<polygon points="27.67,18.53 18.81,25.64 9.36,31.96 3.77,18.41 17.59,11.46" fill="#1d1d1d"/>
<polygon points="9.36,31.96 -1.93,31.74 -13.17,30.58 -7.78,15.92 3.77,18.41" fill="#1f1f1f"/>
<polygon points="-13.17,30.58 -20.1,24.64 -27.32,19.05 -14.31,12.96 -7.78,15.92" fill="#171717"/>
<polygon points="-27.32,19.05 -30.68,8.37 -33.2,-2.53 -21.46,-1.43 -14.31,12.96" fill="#333333"/>
<polygon points="-33.2,-2.53 -29.3,-12.35 -24.99,-22.01 -13.87,-13.24 -21.46,-1.43" fill="#464646"/>
<polygon points="-24.99,-22.01 -17.96,-26.24 -11.47,-31.26 -8.74,-18.24 -13.87,-13.24" fill="#484848"/>
<polygon points="-11.47,-31.26 -0.96,-31.79 9.56,-31.9 2.78,-17.8 -8.74,-18.24" fill="#3e3e3e"/>
<polygon points="2.78,-17.8 16.65,-12.59 0,0" fill="#232323"/>
<polygon points="16.65,-12.59 18.71,2.79 0,0" fill="#242424"/>
<polygon points="18.71,2.79 17.59,11.46 0,0" fill="#242424"/>
<polygon points="17.59,11.46 3.77,18.41 0,0" fill="#1f1f1f"/>
<polygon points="3.77,18.41 -7.78,15.92 0,0" fill="#262626"/>
<polygon points="-7.78,15.92 -14.31,12.96 0,0" fill="#1e1e1e"/>
<polygon points="-14.31,12.96 -21.46,-1.43 0,0" fill="#2a2a2a"/>
<polygon points="-21.46,-1.43 -13.87,-13.24 0,0" fill="#323232"/>
<polygon points="-13.87,-13.24 -8.74,-18.24 0,0" fill="#373737"/>
<polygon points="-8.74,-18.24 2.78,-17.8 0,0" fill="#2c2c2c"/>
<polygon points="1.21,-10.73 9.78,-5.06 8.14,5.88 -2.65,9.01 -9.04,2.51 -6.86,-7.39" fill="#212121"/>
<rect x="-1.9" y="-26.2" width="3.8" height="21.8" fill="#8fcff8"/>
</g>
</g>
<rect x="1320" y="576.4" width="94.9" height="32.3" fill="url(#vb)"/>
<g transform="translate(1319.8 633)">
<rect x="-0.5" y="-0.5" width="96.1" height="66.1" fill="#3d4a55" opacity="0.7"/>
<rect x="0" y="0" width="95.1" height="65.1" fill="#b4e1fb"/>
<rect x="2" y="2" width="91.1" height="61.1" fill="url(#btnon)"/>
<polygon points="2,2 14.5,2 2,14.5" fill="#565656" opacity="0.85"/>
<polygon points="93.1,2 80.6,2 93.1,14.5" fill="#525252" opacity="0.85"/>
<polygon points="93.1,63.1 80.6,63.1 93.1,50.6" fill="#080808" opacity="0.8"/>
<polygon points="2,63.1 14.5,63.1 2,50.6" fill="#1c1c1c" opacity="0.5"/>
</g>
<g transform="translate(1319.7 722.5)">
<rect x="-0.5" y="-0.5" width="96.2" height="65.8" fill="#3d4a55" opacity="0.7"/>
<rect x="0" y="0" width="95.2" height="64.8" fill="#b4e1fb"/>
<rect x="2" y="2" width="91.2" height="60.8" fill="url(#btnon)"/>
<polygon points="2,2 14.5,2 2,14.5" fill="#565656" opacity="0.85"/>
<polygon points="93.2,2 80.7,2 93.2,14.5" fill="#525252" opacity="0.85"/>
<polygon points="93.2,62.8 80.7,62.8 93.2,50.3" fill="#080808" opacity="0.8"/>
<polygon points="2,62.8 14.5,62.8 2,50.3" fill="#1c1c1c" opacity="0.5"/>
</g>
<rect x="142.9" y="752.4" width="113.5" height="5" fill="#191919"/>
<rect x="142.45" y="752.7" width="2.9" height="4.4" rx="1.2" fill="#3c5966"/>
<rect x="146.88" y="752.7" width="2.9" height="4.4" rx="1.2" fill="#6f9fb8"/>
<rect x="151.31" y="752.7" width="2.9" height="4.4" rx="1.2" fill="#9edcfb"/>
<rect x="155.74" y="752.7" width="2.9" height="4.4" rx="1.2" fill="#6f9fb8"/>
<rect x="160.17" y="752.7" width="2.9" height="4.4" rx="1.2" fill="#2f424b"/>
<rect x="164.6" y="752.7" width="2.9" height="4.4" rx="1.2" fill="#3c5966"/>
<rect x="169.03" y="752.7" width="2.9" height="4.4" rx="1.2" fill="#6f9fb8"/>
<rect x="173.46" y="752.7" width="2.9" height="4.4" rx="1.2" fill="#9edcfb"/>
<rect x="177.89" y="752.7" width="2.9" height="4.4" rx="1.2" fill="#6f9fb8"/>
<rect x="182.32" y="752.7" width="2.9" height="4.4" rx="1.2" fill="#2f424b"/>
<rect x="186.75" y="752.7" width="2.9" height="4.4" rx="1.2" fill="#3c5966"/>
<rect x="191.18" y="752.7" width="2.9" height="4.4" rx="1.2" fill="#6f9fb8"/>
<rect x="195.61" y="752.7" width="2.9" height="4.4" rx="1.2" fill="#9edcfb"/>
<rect x="200.04" y="752.7" width="2.9" height="4.4" rx="1.2" fill="#6f9fb8"/>
<rect x="204.47" y="752.7" width="2.9" height="4.4" rx="1.2" fill="#2f424b"/>
<rect x="208.9" y="752.7" width="2.9" height="4.4" rx="1.2" fill="#3c5966"/>
<rect x="213.33" y="752.7" width="2.9" height="4.4" rx="1.2" fill="#6f9fb8"/>
<rect x="217.76" y="752.7" width="2.9" height="4.4" rx="1.2" fill="#9edcfb"/>
<rect x="222.19" y="752.7" width="2.9" height="4.4" rx="1.2" fill="#6f9fb8"/>
<rect x="226.62" y="752.7" width="2.9" height="4.4" rx="1.2" fill="#2f424b"/>
<rect x="231.05" y="752.7" width="2.9" height="4.4" rx="1.2" fill="#3c5966"/>
<rect x="235.48" y="752.7" width="2.9" height="4.4" rx="1.2" fill="#6f9fb8"/>
<rect x="239.91" y="752.7" width="2.9" height="4.4" rx="1.2" fill="#9edcfb"/>
<rect x="244.34" y="752.7" width="2.9" height="4.4" rx="1.2" fill="#6f9fb8"/>
<rect x="248.77" y="752.7" width="2.9" height="4.4" rx="1.2" fill="#2f424b"/>
<rect x="253.2" y="752.7" width="2.9" height="4.4" rx="1.2" fill="#3c5966"/>
<rect x="256" y="752.4" width="30" height="5" fill="#1c1c1c"/>
<rect x="380" y="752.4" width="32" height="5" fill="#1c1c1c"/>
<rect x="253.8" y="696.6" width="5" height="55.9" fill="#191919"/>
<rect x="254.1" y="696.15" width="4.4" height="2.9" rx="1.2" fill="#9edcfb"/>
<rect x="254.1" y="700.58" width="4.4" height="2.9" rx="1.2" fill="#6f9fb8"/>
<rect x="254.1" y="705.01" width="4.4" height="2.9" rx="1.2" fill="#3c5966"/>
<rect x="254.1" y="709.44" width="4.4" height="2.9" rx="1.2" fill="#2f424b"/>
<rect x="254.1" y="713.87" width="4.4" height="2.9" rx="1.2" fill="#6f9fb8"/>
<rect x="254.1" y="718.3" width="4.4" height="2.9" rx="1.2" fill="#9edcfb"/>
<rect x="254.1" y="722.73" width="4.4" height="2.9" rx="1.2" fill="#6f9fb8"/>
<rect x="254.1" y="727.16" width="4.4" height="2.9" rx="1.2" fill="#3c5966"/>
<rect x="254.1" y="731.59" width="4.4" height="2.9" rx="1.2" fill="#2f424b"/>
<rect x="254.1" y="736.02" width="4.4" height="2.9" rx="1.2" fill="#6f9fb8"/>
<rect x="254.1" y="740.45" width="4.4" height="2.9" rx="1.2" fill="#9edcfb"/>
<rect x="254.1" y="744.88" width="4.4" height="2.9" rx="1.2" fill="#6f9fb8"/>
<rect x="254.1" y="749.31" width="4.4" height="2.9" rx="1.2" fill="#3c5966"/>
<rect x="409.9" y="696.6" width="5" height="55.9" fill="#191919"/>
<rect x="410.2" y="696.15" width="4.4" height="2.9" rx="1.2" fill="#3c5966"/>
<rect x="410.2" y="700.58" width="4.4" height="2.9" rx="1.2" fill="#2f424b"/>
<rect x="410.2" y="705.01" width="4.4" height="2.9" rx="1.2" fill="#6f9fb8"/>
<rect x="410.2" y="709.44" width="4.4" height="2.9" rx="1.2" fill="#9edcfb"/>
<rect x="410.2" y="713.87" width="4.4" height="2.9" rx="1.2" fill="#6f9fb8"/>
<rect x="410.2" y="718.3" width="4.4" height="2.9" rx="1.2" fill="#3c5966"/>
<rect x="410.2" y="722.73" width="4.4" height="2.9" rx="1.2" fill="#2f424b"/>
<rect x="410.2" y="727.16" width="4.4" height="2.9" rx="1.2" fill="#6f9fb8"/>
<rect x="410.2" y="731.59" width="4.4" height="2.9" rx="1.2" fill="#9edcfb"/>
<rect x="410.2" y="736.02" width="4.4" height="2.9" rx="1.2" fill="#6f9fb8"/>
<rect x="410.2" y="740.45" width="4.4" height="2.9" rx="1.2" fill="#3c5966"/>
<rect x="410.2" y="744.88" width="4.4" height="2.9" rx="1.2" fill="#2f424b"/>
<rect x="410.2" y="749.31" width="4.4" height="2.9" rx="1.2" fill="#6f9fb8"/>
<rect x="411.4" y="752.4" width="892.6" height="5" fill="#191919"/>
<rect x="410.95" y="752.7" width="2.9" height="4.4" rx="1.2" fill="#6f9fb8"/>
<rect x="415.38" y="752.7" width="2.9" height="4.4" rx="1.2" fill="#9edcfb"/>
<rect x="419.81" y="752.7" width="2.9" height="4.4" rx="1.2" fill="#6f9fb8"/>
<rect x="424.24" y="752.7" width="2.9" height="4.4" rx="1.2" fill="#2f424b"/>
<rect x="428.67" y="752.7" width="2.9" height="4.4" rx="1.2" fill="#3c5966"/>
<rect x="433.1" y="752.7" width="2.9" height="4.4" rx="1.2" fill="#6f9fb8"/>
<rect x="437.53" y="752.7" width="2.9" height="4.4" rx="1.2" fill="#9edcfb"/>
<rect x="441.96" y="752.7" width="2.9" height="4.4" rx="1.2" fill="#6f9fb8"/>
<rect x="446.39" y="752.7" width="2.9" height="4.4" rx="1.2" fill="#2f424b"/>
<rect x="450.82" y="752.7" width="2.9" height="4.4" rx="1.2" fill="#3c5966"/>
<rect x="455.25" y="752.7" width="2.9" height="4.4" rx="1.2" fill="#6f9fb8"/>
<rect x="459.68" y="752.7" width="2.9" height="4.4" rx="1.2" fill="#9edcfb"/>
<rect x="464.11" y="752.7" width="2.9" height="4.4" rx="1.2" fill="#6f9fb8"/>
<rect x="468.54" y="752.7" width="2.9" height="4.4" rx="1.2" fill="#2f424b"/>
<rect x="472.97" y="752.7" width="2.9" height="4.4" rx="1.2" fill="#3c5966"/>
<rect x="477.4" y="752.7" width="2.9" height="4.4" rx="1.2" fill="#6f9fb8"/>
<rect x="481.83" y="752.7" width="2.9" height="4.4" rx="1.2" fill="#9edcfb"/>
<rect x="486.26" y="752.7" width="2.9" height="4.4" rx="1.2" fill="#6f9fb8"/>
<rect x="490.69" y="752.7" width="2.9" height="4.4" rx="1.2" fill="#2f424b"/>
<rect x="495.12" y="752.7" width="2.9" height="4.4" rx="1.2" fill="#3c5966"/>
<rect x="499.55" y="752.7" width="2.9" height="4.4" rx="1.2" fill="#6f9fb8"/>
<rect x="503.98" y="752.7" width="2.9" height="4.4" rx="1.2" fill="#9edcfb"/>
<rect x="508.41" y="752.7" width="2.9" height="4.4" rx="1.2" fill="#6f9fb8"/>
<rect x="512.84" y="752.7" width="2.9" height="4.4" rx="1.2" fill="#2f424b"/>
<rect x="517.27" y="752.7" width="2.9" height="4.4" rx="1.2" fill="#3c5966"/>
<rect x="521.7" y="752.7" width="2.9" height="4.4" rx="1.2" fill="#6f9fb8"/>
<rect x="526.13" y="752.7" width="2.9" height="4.4" rx="1.2" fill="#9edcfb"/>
<rect x="530.56" y="752.7" width="2.9" height="4.4" rx="1.2" fill="#6f9fb8"/>
<rect x="534.99" y="752.7" width="2.9" height="4.4" rx="1.2" fill="#2f424b"/>
<rect x="539.42" y="752.7" width="2.9" height="4.4" rx="1.2" fill="#3c5966"/>
<rect x="543.85" y="752.7" width="2.9" height="4.4" rx="1.2" fill="#6f9fb8"/>
<rect x="548.28" y="752.7" width="2.9" height="4.4" rx="1.2" fill="#9edcfb"/>
<rect x="552.71" y="752.7" width="2.9" height="4.4" rx="1.2" fill="#6f9fb8"/>
<rect x="557.14" y="752.7" width="2.9" height="4.4" rx="1.2" fill="#2f424b"/>
<rect x="561.57" y="752.7" width="2.9" height="4.4" rx="1.2" fill="#3c5966"/>
<rect x="566" y="752.7" width="2.9" height="4.4" rx="1.2" fill="#6f9fb8"/>
<rect x="570.43" y="752.7" width="2.9" height="4.4" rx="1.2" fill="#9edcfb"/>
<rect x="574.86" y="752.7" width="2.9" height="4.4" rx="1.2" fill="#6f9fb8"/>
<rect x="579.29" y="752.7" width="2.9" height="4.4" rx="1.2" fill="#2f424b"/>
<rect x="583.72" y="752.7" width="2.9" height="4.4" rx="1.2" fill="#3c5966"/>
<rect x="588.15" y="752.7" width="2.9" height="4.4" rx="1.2" fill="#6f9fb8"/>
<rect x="592.58" y="752.7" width="2.9" height="4.4" rx="1.2" fill="#9edcfb"/>
<rect x="597.01" y="752.7" width="2.9" height="4.4" rx="1.2" fill="#6f9fb8"/>
<rect x="601.44" y="752.7" width="2.9" height="4.4" rx="1.2" fill="#2f424b"/>
<rect x="605.87" y="752.7" width="2.9" height="4.4" rx="1.2" fill="#3c5966"/>
<rect x="610.3" y="752.7" width="2.9" height="4.4" rx="1.2" fill="#6f9fb8"/>
<rect x="614.73" y="752.7" width="2.9" height="4.4" rx="1.2" fill="#9edcfb"/>
<rect x="619.16" y="752.7" width="2.9" height="4.4" rx="1.2" fill="#6f9fb8"/>
<rect x="623.59" y="752.7" width="2.9" height="4.4" rx="1.2" fill="#2f424b"/>
<rect x="628.02" y="752.7" width="2.9" height="4.4" rx="1.2" fill="#3c5966"/>
<rect x="632.45" y="752.7" width="2.9" height="4.4" rx="1.2" fill="#6f9fb8"/>
<rect x="636.88" y="752.7" width="2.9" height="4.4" rx="1.2" fill="#9edcfb"/>
<rect x="641.31" y="752.7" width="2.9" height="4.4" rx="1.2" fill="#6f9fb8"/>
<rect x="645.74" y="752.7" width="2.9" height="4.4" rx="1.2" fill="#2f424b"/>
<rect x="650.17" y="752.7" width="2.9" height="4.4" rx="1.2" fill="#3c5966"/>
<rect x="654.6" y="752.7" width="2.9" height="4.4" rx="1.2" fill="#6f9fb8"/>
<rect x="659.03" y="752.7" width="2.9" height="4.4" rx="1.2" fill="#9edcfb"/>
<rect x="663.46" y="752.7" width="2.9" height="4.4" rx="1.2" fill="#6f9fb8"/>
<rect x="667.89" y="752.7" width="2.9" height="4.4" rx="1.2" fill="#2f424b"/>
<rect x="672.32" y="752.7" width="2.9" height="4.4" rx="1.2" fill="#3c5966"/>
<rect x="676.75" y="752.7" width="2.9" height="4.4" rx="1.2" fill="#6f9fb8"/>
<rect x="681.18" y="752.7" width="2.9" height="4.4" rx="1.2" fill="#9edcfb"/>
<rect x="685.61" y="752.7" width="2.9" height="4.4" rx="1.2" fill="#6f9fb8"/>
<rect x="690.04" y="752.7" width="2.9" height="4.4" rx="1.2" fill="#2f424b"/>
<rect x="694.47" y="752.7" width="2.9" height="4.4" rx="1.2" fill="#3c5966"/>
<rect x="698.9" y="752.7" width="2.9" height="4.4" rx="1.2" fill="#6f9fb8"/>
<rect x="703.33" y="752.7" width="2.9" height="4.4" rx="1.2" fill="#9edcfb"/>
<rect x="707.76" y="752.7" width="2.9" height="4.4" rx="1.2" fill="#6f9fb8"/>
<rect x="712.19" y="752.7" width="2.9" height="4.4" rx="1.2" fill="#2f424b"/>
<rect x="716.62" y="752.7" width="2.9" height="4.4" rx="1.2" fill="#3c5966"/>
<rect x="721.05" y="752.7" width="2.9" height="4.4" rx="1.2" fill="#6f9fb8"/>
<rect x="725.48" y="752.7" width="2.9" height="4.4" rx="1.2" fill="#9edcfb"/>
<rect x="729.91" y="752.7" width="2.9" height="4.4" rx="1.2" fill="#6f9fb8"/>
<rect x="734.34" y="752.7" width="2.9" height="4.4" rx="1.2" fill="#2f424b"/>
<rect x="738.77" y="752.7" width="2.9" height="4.4" rx="1.2" fill="#3c5966"/>
<rect x="743.2" y="752.7" width="2.9" height="4.4" rx="1.2" fill="#6f9fb8"/>
<rect x="747.63" y="752.7" width="2.9" height="4.4" rx="1.2" fill="#9edcfb"/>
<rect x="752.06" y="752.7" width="2.9" height="4.4" rx="1.2" fill="#6f9fb8"/>
<rect x="756.49" y="752.7" width="2.9" height="4.4" rx="1.2" fill="#2f424b"/>
<rect x="760.92" y="752.7" width="2.9" height="4.4" rx="1.2" fill="#3c5966"/>
<rect x="765.35" y="752.7" width="2.9" height="4.4" rx="1.2" fill="#6f9fb8"/>
<rect x="769.78" y="752.7" width="2.9" height="4.4" rx="1.2" fill="#9edcfb"/>
<rect x="774.21" y="752.7" width="2.9" height="4.4" rx="1.2" fill="#6f9fb8"/>
<rect x="778.64" y="752.7" width="2.9" height="4.4" rx="1.2" fill="#2f424b"/>
<rect x="783.07" y="752.7" width="2.9" height="4.4" rx="1.2" fill="#3c5966"/>
<rect x="787.5" y="752.7" width="2.9" height="4.4" rx="1.2" fill="#6f9fb8"/>
<rect x="791.93" y="752.7" width="2.9" height="4.4" rx="1.2" fill="#9edcfb"/>
<rect x="796.36" y="752.7" width="2.9" height="4.4" rx="1.2" fill="#6f9fb8"/>
<rect x="800.79" y="752.7" width="2.9" height="4.4" rx="1.2" fill="#2f424b"/>
<rect x="805.22" y="752.7" width="2.9" height="4.4" rx="1.2" fill="#3c5966"/>
<rect x="809.65" y="752.7" width="2.9" height="4.4" rx="1.2" fill="#6f9fb8"/>
<rect x="814.08" y="752.7" width="2.9" height="4.4" rx="1.2" fill="#9edcfb"/>
<rect x="818.51" y="752.7" width="2.9" height="4.4" rx="1.2" fill="#6f9fb8"/>
<rect x="822.94" y="752.7" width="2.9" height="4.4" rx="1.2" fill="#2f424b"/>
<rect x="827.37" y="752.7" width="2.9" height="4.4" rx="1.2" fill="#3c5966"/>
<rect x="831.8" y="752.7" width="2.9" height="4.4" rx="1.2" fill="#6f9fb8"/>
<rect x="836.23" y="752.7" width="2.9" height="4.4" rx="1.2" fill="#9edcfb"/>
<rect x="840.66" y="752.7" width="2.9" height="4.4" rx="1.2" fill="#6f9fb8"/>
<rect x="845.09" y="752.7" width="2.9" height="4.4" rx="1.2" fill="#2f424b"/>
<rect x="849.52" y="752.7" width="2.9" height="4.4" rx="1.2" fill="#3c5966"/>
<rect x="853.95" y="752.7" width="2.9" height="4.4" rx="1.2" fill="#6f9fb8"/>
<rect x="858.38" y="752.7" width="2.9" height="4.4" rx="1.2" fill="#9edcfb"/>
<rect x="862.81" y="752.7" width="2.9" height="4.4" rx="1.2" fill="#6f9fb8"/>
<rect x="867.24" y="752.7" width="2.9" height="4.4" rx="1.2" fill="#2f424b"/>
<rect x="871.67" y="752.7" width="2.9" height="4.4" rx="1.2" fill="#3c5966"/>
<rect x="876.1" y="752.7" width="2.9" height="4.4" rx="1.2" fill="#6f9fb8"/>
<rect x="880.53" y="752.7" width="2.9" height="4.4" rx="1.2" fill="#9edcfb"/>
<rect x="884.96" y="752.7" width="2.9" height="4.4" rx="1.2" fill="#6f9fb8"/>
<rect x="889.39" y="752.7" width="2.9" height="4.4" rx="1.2" fill="#2f424b"/>
<rect x="893.82" y="752.7" width="2.9" height="4.4" rx="1.2" fill="#3c5966"/>
<rect x="898.25" y="752.7" width="2.9" height="4.4" rx="1.2" fill="#6f9fb8"/>
<rect x="902.68" y="752.7" width="2.9" height="4.4" rx="1.2" fill="#9edcfb"/>
<rect x="907.11" y="752.7" width="2.9" height="4.4" rx="1.2" fill="#6f9fb8"/>
<rect x="911.54" y="752.7" width="2.9" height="4.4" rx="1.2" fill="#2f424b"/>
<rect x="915.97" y="752.7" width="2.9" height="4.4" rx="1.2" fill="#3c5966"/>
<rect x="920.4" y="752.7" width="2.9" height="4.4" rx="1.2" fill="#6f9fb8"/>
<rect x="924.83" y="752.7" width="2.9" height="4.4" rx="1.2" fill="#9edcfb"/>
<rect x="929.26" y="752.7" width="2.9" height="4.4" rx="1.2" fill="#6f9fb8"/>
<rect x="933.69" y="752.7" width="2.9" height="4.4" rx="1.2" fill="#2f424b"/>
<rect x="938.12" y="752.7" width="2.9" height="4.4" rx="1.2" fill="#3c5966"/>
<rect x="942.55" y="752.7" width="2.9" height="4.4" rx="1.2" fill="#6f9fb8"/>
<rect x="946.98" y="752.7" width="2.9" height="4.4" rx="1.2" fill="#9edcfb"/>
<rect x="951.41" y="752.7" width="2.9" height="4.4" rx="1.2" fill="#6f9fb8"/>
<rect x="955.84" y="752.7" width="2.9" height="4.4" rx="1.2" fill="#2f424b"/>
<rect x="960.27" y="752.7" width="2.9" height="4.4" rx="1.2" fill="#3c5966"/>
<rect x="964.7" y="752.7" width="2.9" height="4.4" rx="1.2" fill="#6f9fb8"/>
<rect x="969.13" y="752.7" width="2.9" height="4.4" rx="1.2" fill="#9edcfb"/>
<rect x="973.56" y="752.7" width="2.9" height="4.4" rx="1.2" fill="#6f9fb8"/>
<rect x="977.99" y="752.7" width="2.9" height="4.4" rx="1.2" fill="#2f424b"/>
<rect x="982.42" y="752.7" width="2.9" height="4.4" rx="1.2" fill="#3c5966"/>
<rect x="986.85" y="752.7" width="2.9" height="4.4" rx="1.2" fill="#6f9fb8"/>
<rect x="991.28" y="752.7" width="2.9" height="4.4" rx="1.2" fill="#9edcfb"/>
<rect x="995.71" y="752.7" width="2.9" height="4.4" rx="1.2" fill="#6f9fb8"/>
<rect x="1000.14" y="752.7" width="2.9" height="4.4" rx="1.2" fill="#2f424b"/>
<rect x="1004.57" y="752.7" width="2.9" height="4.4" rx="1.2" fill="#3c5966"/>
<rect x="1009" y="752.7" width="2.9" height="4.4" rx="1.2" fill="#6f9fb8"/>
<rect x="1013.43" y="752.7" width="2.9" height="4.4" rx="1.2" fill="#9edcfb"/>
<rect x="1017.86" y="752.7" width="2.9" height="4.4" rx="1.2" fill="#6f9fb8"/>
<rect x="1022.29" y="752.7" width="2.9" height="4.4" rx="1.2" fill="#2f424b"/>
<rect x="1026.72" y="752.7" width="2.9" height="4.4" rx="1.2" fill="#3c5966"/>
<rect x="1031.15" y="752.7" width="2.9" height="4.4" rx="1.2" fill="#6f9fb8"/>
<rect x="1035.58" y="752.7" width="2.9" height="4.4" rx="1.2" fill="#9edcfb"/>
<rect x="1040.01" y="752.7" width="2.9" height="4.4" rx="1.2" fill="#6f9fb8"/>
<rect x="1044.44" y="752.7" width="2.9" height="4.4" rx="1.2" fill="#2f424b"/>
<rect x="1048.87" y="752.7" width="2.9" height="4.4" rx="1.2" fill="#3c5966"/>
<rect x="1053.3" y="752.7" width="2.9" height="4.4" rx="1.2" fill="#6f9fb8"/>
<rect x="1057.73" y="752.7" width="2.9" height="4.4" rx="1.2" fill="#9edcfb"/>
<rect x="1062.16" y="752.7" width="2.9" height="4.4" rx="1.2" fill="#6f9fb8"/>
<rect x="1066.59" y="752.7" width="2.9" height="4.4" rx="1.2" fill="#2f424b"/>
<rect x="1071.02" y="752.7" width="2.9" height="4.4" rx="1.2" fill="#3c5966"/>
<rect x="1075.45" y="752.7" width="2.9" height="4.4" rx="1.2" fill="#6f9fb8"/>
<rect x="1079.88" y="752.7" width="2.9" height="4.4" rx="1.2" fill="#9edcfb"/>
<rect x="1084.31" y="752.7" width="2.9" height="4.4" rx="1.2" fill="#6f9fb8"/>
<rect x="1088.74" y="752.7" width="2.9" height="4.4" rx="1.2" fill="#2f424b"/>
<rect x="1093.17" y="752.7" width="2.9" height="4.4" rx="1.2" fill="#3c5966"/>
<rect x="1097.6" y="752.7" width="2.9" height="4.4" rx="1.2" fill="#6f9fb8"/>
<rect x="1102.03" y="752.7" width="2.9" height="4.4" rx="1.2" fill="#9edcfb"/>
<rect x="1106.46" y="752.7" width="2.9" height="4.4" rx="1.2" fill="#6f9fb8"/>
<rect x="1110.89" y="752.7" width="2.9" height="4.4" rx="1.2" fill="#2f424b"/>
<rect x="1115.32" y="752.7" width="2.9" height="4.4" rx="1.2" fill="#3c5966"/>
<rect x="1119.75" y="752.7" width="2.9" height="4.4" rx="1.2" fill="#6f9fb8"/>
<rect x="1124.18" y="752.7" width="2.9" height="4.4" rx="1.2" fill="#9edcfb"/>
<rect x="1128.61" y="752.7" width="2.9" height="4.4" rx="1.2" fill="#6f9fb8"/>
<rect x="1133.04" y="752.7" width="2.9" height="4.4" rx="1.2" fill="#2f424b"/>
<rect x="1137.47" y="752.7" width="2.9" height="4.4" rx="1.2" fill="#3c5966"/>
<rect x="1141.9" y="752.7" width="2.9" height="4.4" rx="1.2" fill="#6f9fb8"/>
<rect x="1146.33" y="752.7" width="2.9" height="4.4" rx="1.2" fill="#9edcfb"/>
<rect x="1150.76" y="752.7" width="2.9" height="4.4" rx="1.2" fill="#6f9fb8"/>
<rect x="1155.19" y="752.7" width="2.9" height="4.4" rx="1.2" fill="#2f424b"/>
<rect x="1159.62" y="752.7" width="2.9" height="4.4" rx="1.2" fill="#3c5966"/>
<rect x="1164.05" y="752.7" width="2.9" height="4.4" rx="1.2" fill="#6f9fb8"/>
<rect x="1168.48" y="752.7" width="2.9" height="4.4" rx="1.2" fill="#9edcfb"/>
<rect x="1172.91" y="752.7" width="2.9" height="4.4" rx="1.2" fill="#6f9fb8"/>
<rect x="1177.34" y="752.7" width="2.9" height="4.4" rx="1.2" fill="#2f424b"/>
<rect x="1181.77" y="752.7" width="2.9" height="4.4" rx="1.2" fill="#3c5966"/>
<rect x="1186.2" y="752.7" width="2.9" height="4.4" rx="1.2" fill="#6f9fb8"/>
<rect x="1190.63" y="752.7" width="2.9" height="4.4" rx="1.2" fill="#9edcfb"/>
<rect x="1195.06" y="752.7" width="2.9" height="4.4" rx="1.2" fill="#6f9fb8"/>
<rect x="1199.49" y="752.7" width="2.9" height="4.4" rx="1.2" fill="#2f424b"/>
<rect x="1203.92" y="752.7" width="2.9" height="4.4" rx="1.2" fill="#3c5966"/>
<rect x="1208.35" y="752.7" width="2.9" height="4.4" rx="1.2" fill="#6f9fb8"/>
<rect x="1212.78" y="752.7" width="2.9" height="4.4" rx="1.2" fill="#9edcfb"/>
<rect x="1217.21" y="752.7" width="2.9" height="4.4" rx="1.2" fill="#6f9fb8"/>
<rect x="1221.64" y="752.7" width="2.9" height="4.4" rx="1.2" fill="#2f424b"/>
<rect x="1226.07" y="752.7" width="2.9" height="4.4" rx="1.2" fill="#3c5966"/>
<rect x="1230.5" y="752.7" width="2.9" height="4.4" rx="1.2" fill="#6f9fb8"/>
<rect x="1234.93" y="752.7" width="2.9" height="4.4" rx="1.2" fill="#9edcfb"/>
<rect x="1239.36" y="752.7" width="2.9" height="4.4" rx="1.2" fill="#6f9fb8"/>
<rect x="1243.79" y="752.7" width="2.9" height="4.4" rx="1.2" fill="#2f424b"/>
<rect x="1248.22" y="752.7" width="2.9" height="4.4" rx="1.2" fill="#3c5966"/>
<rect x="1252.65" y="752.7" width="2.9" height="4.4" rx="1.2" fill="#6f9fb8"/>
<rect x="1257.08" y="752.7" width="2.9" height="4.4" rx="1.2" fill="#9edcfb"/>
<rect x="1261.51" y="752.7" width="2.9" height="4.4" rx="1.2" fill="#6f9fb8"/>
<rect x="1265.94" y="752.7" width="2.9" height="4.4" rx="1.2" fill="#2f424b"/>
<rect x="1270.37" y="752.7" width="2.9" height="4.4" rx="1.2" fill="#3c5966"/>
<rect x="1274.8" y="752.7" width="2.9" height="4.4" rx="1.2" fill="#6f9fb8"/>
<rect x="1279.23" y="752.7" width="2.9" height="4.4" rx="1.2" fill="#9edcfb"/>
<rect x="1283.66" y="752.7" width="2.9" height="4.4" rx="1.2" fill="#6f9fb8"/>
<rect x="1288.09" y="752.7" width="2.9" height="4.4" rx="1.2" fill="#2f424b"/>
<rect x="1292.52" y="752.7" width="2.9" height="4.4" rx="1.2" fill="#3c5966"/>
<rect x="1296.95" y="752.7" width="2.9" height="4.4" rx="1.2" fill="#6f9fb8"/>
<rect x="1301.38" y="752.7" width="2.9" height="4.4" rx="1.2" fill="#9edcfb"/>
<rect x="481.1" y="696.6" width="5" height="12.4" fill="#191919"/>
<rect x="481.4" y="696.15" width="4.4" height="2.9" rx="1.2" fill="#6f9fb8"/>
<rect x="481.4" y="700.58" width="4.4" height="2.9" rx="1.2" fill="#3c5966"/>
<rect x="481.4" y="705.01" width="4.4" height="2.9" rx="1.2" fill="#2f424b"/>
<rect x="482.6" y="708.7" width="75.4" height="5" fill="#191919"/>
<rect x="482.15" y="709" width="2.9" height="4.4" rx="1.2" fill="#6f9fb8"/>
<rect x="486.58" y="709" width="2.9" height="4.4" rx="1.2" fill="#2f424b"/>
<rect x="491.01" y="709" width="2.9" height="4.4" rx="1.2" fill="#3c5966"/>
<rect x="495.44" y="709" width="2.9" height="4.4" rx="1.2" fill="#6f9fb8"/>
<rect x="499.87" y="709" width="2.9" height="4.4" rx="1.2" fill="#9edcfb"/>
<rect x="504.3" y="709" width="2.9" height="4.4" rx="1.2" fill="#6f9fb8"/>
<rect x="508.73" y="709" width="2.9" height="4.4" rx="1.2" fill="#2f424b"/>
<rect x="513.16" y="709" width="2.9" height="4.4" rx="1.2" fill="#3c5966"/>
<rect x="517.59" y="709" width="2.9" height="4.4" rx="1.2" fill="#6f9fb8"/>
<rect x="522.02" y="709" width="2.9" height="4.4" rx="1.2" fill="#9edcfb"/>
<rect x="526.45" y="709" width="2.9" height="4.4" rx="1.2" fill="#6f9fb8"/>
<rect x="530.88" y="709" width="2.9" height="4.4" rx="1.2" fill="#2f424b"/>
<rect x="535.31" y="709" width="2.9" height="4.4" rx="1.2" fill="#3c5966"/>
<rect x="539.74" y="709" width="2.9" height="4.4" rx="1.2" fill="#6f9fb8"/>
<rect x="544.17" y="709" width="2.9" height="4.4" rx="1.2" fill="#9edcfb"/>
<rect x="548.6" y="709" width="2.9" height="4.4" rx="1.2" fill="#6f9fb8"/>
<rect x="553.03" y="709" width="2.9" height="4.4" rx="1.2" fill="#2f424b"/>
<rect x="554.7" y="696.6" width="5" height="12.4" fill="#191919"/>
<rect x="555" y="696.15" width="4.4" height="2.9" rx="1.2" fill="#6f9fb8"/>
<rect x="555" y="700.58" width="4.4" height="2.9" rx="1.2" fill="#3c5966"/>
<rect x="555" y="705.01" width="4.4" height="2.9" rx="1.2" fill="#2f424b"/>
<rect x="1259.3" y="696.6" width="5" height="12.4" fill="#191919"/>
<rect x="1259.6" y="696.15" width="4.4" height="2.9" rx="1.2" fill="#6f9fb8"/>
<rect x="1259.6" y="700.58" width="4.4" height="2.9" rx="1.2" fill="#3c5966"/>
<rect x="1259.6" y="705.01" width="4.4" height="2.9" rx="1.2" fill="#2f424b"/>
<rect x="1260.8" y="708.9" width="43.2" height="5" fill="#191919"/>
<rect x="1260.35" y="709.2" width="2.9" height="4.4" rx="1.2" fill="#6f9fb8"/>
<rect x="1264.78" y="709.2" width="2.9" height="4.4" rx="1.2" fill="#2f424b"/>
<rect x="1269.21" y="709.2" width="2.9" height="4.4" rx="1.2" fill="#3c5966"/>
<rect x="1273.64" y="709.2" width="2.9" height="4.4" rx="1.2" fill="#6f9fb8"/>
<rect x="1278.07" y="709.2" width="2.9" height="4.4" rx="1.2" fill="#9edcfb"/>
<rect x="1282.5" y="709.2" width="2.9" height="4.4" rx="1.2" fill="#6f9fb8"/>
<rect x="1286.93" y="709.2" width="2.9" height="4.4" rx="1.2" fill="#2f424b"/>
<rect x="1291.36" y="709.2" width="2.9" height="4.4" rx="1.2" fill="#3c5966"/>
<rect x="1295.79" y="709.2" width="2.9" height="4.4" rx="1.2" fill="#6f9fb8"/>
<rect x="1300.22" y="709.2" width="2.9" height="4.4" rx="1.2" fill="#9edcfb"/>
<g transform="translate(286.1 722.7)">
<rect x="0" y="0" width="95" height="64.5" fill="#090909"/>
<rect x="1.7" y="1.7" width="91.6" height="61.1" fill="url(#btn)"/>
<polygon points="1.7,1.7 14.2,1.7 1.7,14.2" fill="#6a6a6a" opacity="0.85"/>
<polygon points="93.3,1.7 80.8,1.7 93.3,14.2" fill="#666" opacity="0.85"/>
<polygon points="93.3,62.8 80.8,62.8 93.3,50.3" fill="#0c0c0c" opacity="0.8"/>
<polygon points="1.7,62.8 14.2,62.8 1.7,50.3" fill="#1c1c1c" opacity="0.5"/>
</g>
</svg>
<div id="txt">
<h1 class="t logo" style="left:71.8px;top:22.1px;font-size:45.5px;letter-spacing:0.91px;color:#8ccdf4;transform:scaleX(1.2)">stage</h1>
<div class="t sub" style="left:65.19px;top:72px;font-size:13px;letter-spacing:0.66px;color:#a0a0a0;transform:scaleX(1.22)">acoustic enhancement</div>
<div class="t arrow" style="left:329.02px;top:37.33px;font-size:35px;letter-spacing:0px;color:#9a9a9a;transform:scaleX(0.988)">&lt;</div>
<div class="t preset" style="left:436.03px;top:46.9px;font-size:20px;letter-spacing:-0.244px;color:#e6e6e6">Mastering enlivener</div>
<div class="t arrow" style="left:681.52px;top:37.33px;font-size:35px;letter-spacing:0px;color:#9a9a9a;transform:scaleX(0.987)">&gt;</div>
<div class="t ab" style="left:774.68px;top:40.6px;font-size:18.8px;letter-spacing:0px;color:#bfe4ff;transform:scaleX(1.118)">A</div>
<div class="t ab" style="left:799.12px;top:55.7px;font-size:16.8px;letter-spacing:0px;color:#9a9c9e;transform:scaleX(1.347)">B</div>
<div class="t btn" style="left:884.52px;top:47.2px;font-size:16px;letter-spacing:0.32px;color:#8a8a8a;transform:scaleX(1.011)">undo</div>
<div class="t btn" style="left:997.92px;top:47.2px;font-size:16px;letter-spacing:0.32px;color:#8a8a8a;transform:scaleX(1.033)">redo</div>
<div class="t brand" style="left:1230.64px;top:44.4px;font-size:19.5px;letter-spacing:0.39px;color:#a6dfff;transform:scaleX(1.213)">fiedler audio</div>
<h2 class="t title" style="left:62.72px;top:114.3px;font-size:25px;letter-spacing:1.833px;color:#121212;transform:scaleX(1.12)">IN</h2>
<h2 class="t title" style="left:245.52px;top:114.3px;font-size:25px;letter-spacing:2.172px;color:#121212;transform:scaleX(1.12)">PANORAMA</h2>
<h2 class="t title" style="left:628.63px;top:114.3px;font-size:25px;letter-spacing:1.44px;color:#121212;transform:scaleX(1.12)">AMBIENCE</h2>
<h2 class="t title" style="left:1338.15px;top:114.3px;font-size:25px;letter-spacing:0.5px;color:#121212;transform:scaleX(1.024)">OUT</h2>
<h3 class="t title2" style="left:936.39px;top:119px;font-size:17px;letter-spacing:1.364px;color:#121212;transform:scaleX(1.06)">LFO</h3>
<h3 class="t title2" style="left:1117.79px;top:119px;font-size:17px;letter-spacing:0.739px;color:#121212;transform:scaleX(1.06)">COLOUR</h3>
<div class="t lbl" style="left:40.26px;top:148px;font-size:16px;letter-spacing:0.32px;color:#1a1a1a;transform:scaleX(1.072)">gain</div>
<div class="t lbl" style="left:68.36px;top:463.5px;font-size:16px;letter-spacing:0.32px;color:#1a1a1a;transform:scaleX(0.992)">tilt</div>
<div class="t lbl" style="left:238.96px;top:433.8px;font-size:16px;letter-spacing:0.32px;color:#1a1a1a;transform:scaleX(1.133)">pan</div>
<div class="t lbl" style="left:387.91px;top:433.8px;font-size:16px;letter-spacing:0.32px;color:#1a1a1a;transform:scaleX(1.109)">width</div>
<div class="t lbl" style="left:611.04px;top:433.8px;font-size:16px;letter-spacing:0.32px;color:#1a1a1a;transform:scaleX(1.102)">size</div>
<div class="t lbl" style="left:742.29px;top:433.8px;font-size:16px;letter-spacing:0.32px;color:#1a1a1a;transform:scaleX(1.083)">feedback</div>
<div class="t lbl" style="left:911.89px;top:147.8px;font-size:16px;letter-spacing:0.32px;color:#1a1a1a;transform:scaleX(1.084)">frequency</div>
<div class="t lbl" style="left:922.48px;top:306px;font-size:16px;letter-spacing:0.32px;color:#1a1a1a;transform:scaleX(1.074)">amount</div>
<div class="t lbl" style="left:895.21px;top:463.7px;font-size:16px;letter-spacing:0.32px;color:#1a1a1a;transform:scaleX(1.099)">phase spread</div>
<div class="t lbl" style="left:1058.24px;top:147.8px;font-size:16px;letter-spacing:0.32px;color:#1a1a1a;transform:scaleX(1.073)">brilliance</div>
<div class="t lbl" style="left:1176.49px;top:252.6px;font-size:16px;letter-spacing:0.32px;color:#1a1a1a;transform:scaleX(1.111)">presence</div>
<div class="t lbl" style="left:1077.22px;top:357.6px;font-size:16px;letter-spacing:0.32px;color:#1a1a1a;transform:scaleX(1.089)">body</div>
<div class="t lbl" style="left:1197.05px;top:463.7px;font-size:16px;letter-spacing:0.32px;color:#1a1a1a;transform:scaleX(1.136)">bass</div>
<div class="t lbl" style="left:1329.13px;top:463.7px;font-size:16px;letter-spacing:0.32px;color:#1a1a1a;transform:scaleX(1.086)">wet gain</div>
<div class="t lbl" style="left:65.46px;top:622.1px;font-size:14.2px;letter-spacing:0.284px;color:#1a1a1a;transform:scaleX(1.269)">MS</div>
<div class="t lbl" style="left:320.08px;top:208.4px;font-size:16px;letter-spacing:0.32px;color:#5c5c5c;transform:scaleX(1.01)">wet</div>
<div class="t lbl" style="left:321.73px;top:281.3px;font-size:16px;letter-spacing:0.32px;color:#5c5c5c;transform:scaleX(0.989)">dry</div>
<div class="t val" style="left:77.33px;top:425.9px;font-size:18px;word-spacing:-1.53px;color:#f2f2f2">0 dB</div>
<div class="t val" style="left:74.43px;top:583.9px;font-size:18px;word-spacing:-3.03px;color:#f2f2f2">0 dB</div>
<div class="t val" style="left:51.63px;top:741.9px;font-size:18px;word-spacing:-1.37px;color:#f2f2f2">100 %</div>
<div class="t val" style="left:272.13px;top:583.9px;font-size:18px;word-spacing:0px;color:#f2f2f2">0</div>
<div class="t val" style="left:394.13px;top:583.9px;font-size:18px;word-spacing:-3.97px;color:#f2f2f2">100 %</div>
<div class="t val" style="left:618.03px;top:583.9px;font-size:18px;word-spacing:-1.67px;color:#f2f2f2">30 ms</div>
<div class="t val" style="left:753.13px;top:583.9px;font-size:18px;word-spacing:-1.7px;color:#f2f2f2">19.6 %</div>
<div class="t val" style="left:935.33px;top:268px;font-size:18px;word-spacing:-2.07px;color:#f2f2f2">0.7 Hz</div>
<div class="t val" style="left:924.93px;top:425.9px;font-size:18px;word-spacing:-1.6px;color:#f2f2f2">32.6 %</div>
<div class="t val" style="left:934.83px;top:583.9px;font-size:18px;word-spacing:-0.67px;color:#f2f2f2">100 %</div>
<div class="t val" style="left:1068.17px;top:267.9px;font-size:18px;word-spacing:-1.83px;color:#f2f2f2">−100 %</div>
<div class="t val" style="left:1099.23px;top:477.9px;font-size:18px;word-spacing:-0.4px;color:#f2f2f2">0 %</div>
<div class="t val" style="left:1216.93px;top:372.6px;font-size:18px;word-spacing:-0.5px;color:#f2f2f2">0 %</div>
<div class="t val" style="left:1185.57px;top:583.9px;font-size:18px;word-spacing:-1.63px;color:#f2f2f2">−100 %</div>
<div class="t val" style="left:1346.47px;top:583.9px;font-size:18px;word-spacing:-2.53px;color:#f2f2f2">−10 dB</div>
<span class="t cap" style="left:238.17px;top:637.3px;font-size:16px;letter-spacing:0.32px;color:#8e9294;transform:scaleX(1.044)">pan</span>
<span class="t cap" style="left:233.8px;top:651.5px;font-size:16px;letter-spacing:0.32px;color:#8e9294;transform:scaleX(1.007)">delay</span>
<span class="t cap" style="left:377.89px;top:637.3px;font-size:16px;letter-spacing:0.32px;color:#8e9294;transform:scaleX(1.031)">pan wet</span>
<span class="t cap" style="left:387.61px;top:651.5px;font-size:16px;letter-spacing:0.32px;color:#8e9294;transform:scaleX(1.017)">invert</span>
<span class="t cap" style="left:301.93px;top:740.1px;font-size:16px;letter-spacing:0.32px;color:#8e9294;transform:scaleX(1.003)">pan dry</span>
<span class="t cap" style="left:302.74px;top:754px;font-size:16px;letter-spacing:0.32px;color:#8e9294;transform:scaleX(1.063)">bypass</span>
<span class="t cap" style="left:602.37px;top:637.3px;font-size:16px;letter-spacing:0.32px;color:#8e9294;transform:scaleX(1.045)">phase</span>
<span class="t cap" style="left:614.03px;top:651.5px;font-size:16px;letter-spacing:0.32px;color:#8e9294;transform:scaleX(1.071)">left</span>
<span class="t cap" style="left:756.86px;top:637.3px;font-size:16px;letter-spacing:0.32px;color:#c0e6ff;transform:scaleX(1.052)">phase</span>
<span class="t cap" style="left:763.65px;top:651.5px;font-size:16px;letter-spacing:0.32px;color:#c0e6ff;transform:scaleX(0.994)">right</span>
<span class="t cap" style="left:940.16px;top:638.2px;font-size:14.5px;letter-spacing:0.29px;color:#c0e6ff;transform:scaleX(1.11)">LFO</span>
<span class="t cap" style="left:926.19px;top:651.5px;font-size:16px;letter-spacing:0.32px;color:#c0e6ff;transform:scaleX(1.015)">on / off</span>
<span class="t cap" style="left:1066.87px;top:638.2px;font-size:14.5px;letter-spacing:0.29px;color:#c0e6ff;transform:scaleX(1.038)">COLOUR</span>
<span class="t cap" style="left:1069.19px;top:651.5px;font-size:16px;letter-spacing:0.32px;color:#c0e6ff;transform:scaleX(1.015)">on / off</span>
<span class="t cap" style="left:1351.32px;top:650.5px;font-size:16px;letter-spacing:0.32px;color:#c0e6ff;transform:scaleX(1.077)">wet</span>
<span class="t cap" style="left:1337.19px;top:664.9px;font-size:16px;letter-spacing:0.32px;color:#c0e6ff;transform:scaleX(1.02)">on / off</span>
<span class="t cap" style="left:1353.68px;top:739.6px;font-size:16px;letter-spacing:0.32px;color:#c0e6ff;transform:scaleX(1.033)">dry</span>
<span class="t cap" style="left:1337.19px;top:754px;font-size:16px;letter-spacing:0.32px;color:#c0e6ff;transform:scaleX(1.02)">on / off</span>
</div>
</div>
</body>
</html>
